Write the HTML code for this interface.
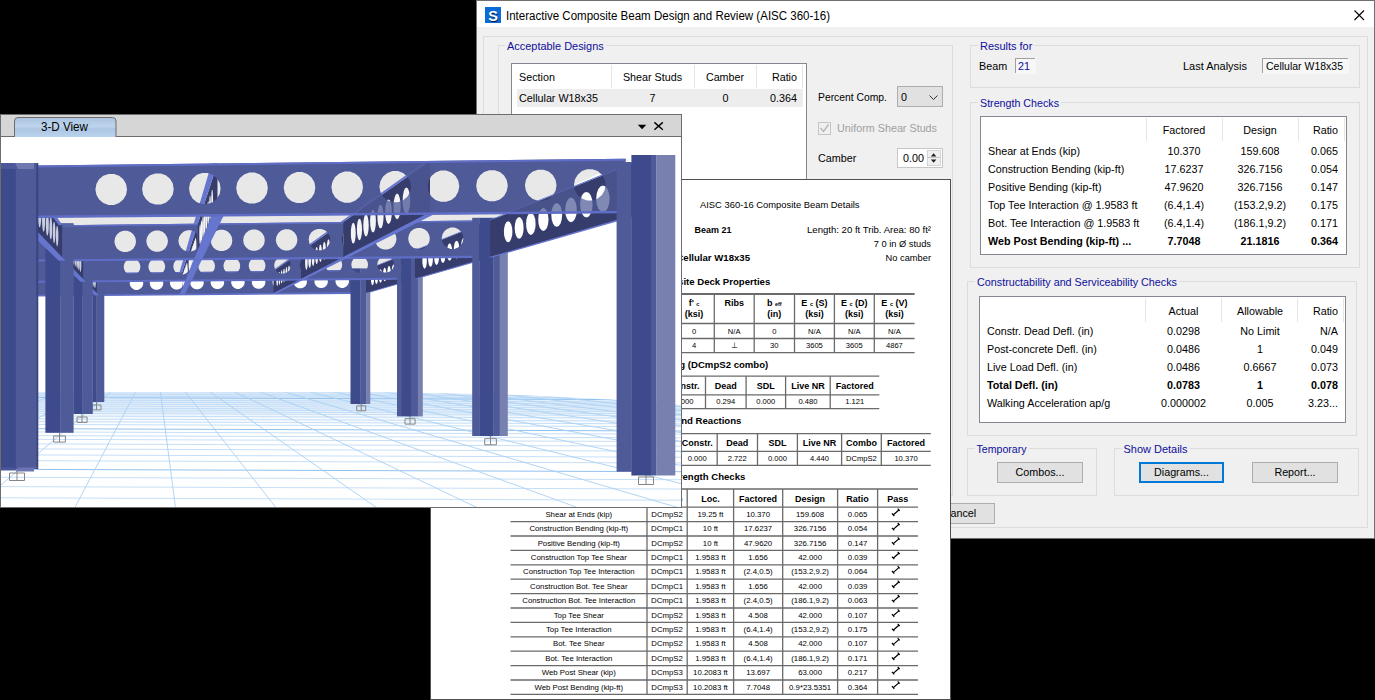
<!DOCTYPE html><html><head><meta charset="utf-8"><style>html,body{margin:0;padding:0;background:#000;overflow:hidden}svg{display:block;font-family:"Liberation Sans",sans-serif}</style></head><body>
<svg width="1375" height="700" viewBox="0 0 1375 700">
<rect x="0" y="0" width="1375" height="700" fill="#000"/>
<rect x="476" y="0" width="899" height="539" fill="#f0f0f0"/>
<rect x="477" y="1" width="897" height="26" fill="#fff"/>
<g shape-rendering="crispEdges">
<rect x="476.5" y="0.5" width="898" height="538" fill="none" stroke="#707070" stroke-width="1"/>
</g>
<rect x="485" y="7" width="16" height="16" fill="#0a6ad6"/>
<text x="493.8" y="21.6" font-size="14.5" text-anchor="middle" font-weight="bold" fill="#0a1a40">S</text>
<text x="493" y="20.8" font-size="14.5" text-anchor="middle" font-weight="bold" fill="#fff">S</text>
<text x="506" y="20" font-size="12" textLength="324" lengthAdjust="spacingAndGlyphs">Interactive Composite Beam Design and Review (AISC 360-16)</text>
<path d="M1354.5 10.5L1364 20M1364 10.5L1354.5 20" stroke="#000" stroke-width="1.1"/>
<g shape-rendering="crispEdges">
<rect x="483.5" y="36.5" width="884" height="491" fill="none" stroke="#dcdcdc" stroke-width="1"/>
</g>
<path d="M505 45.5H498.5V495.5H952.5V45.5H605.7" fill="none" stroke="#dcdcdc" shape-rendering="crispEdges"/>
<text x="507" y="50" font-size="11" fill="#0e0e9c" textLength="96.7" lengthAdjust="spacingAndGlyphs">Acceptable Designs</text>
<path d="M978 45.5H970.5V87.5H1359.5V45.5H1034.3" fill="none" stroke="#dcdcdc" shape-rendering="crispEdges"/>
<text x="980" y="50" font-size="11" fill="#0e0e9c" textLength="52.3" lengthAdjust="spacingAndGlyphs">Results for</text>
<path d="M978 102.5H970.5V267.5H1359.5V102.5H1061" fill="none" stroke="#dcdcdc" shape-rendering="crispEdges"/>
<text x="980" y="107" font-size="11" fill="#0e0e9c" textLength="79" lengthAdjust="spacingAndGlyphs">Strength Checks</text>
<path d="M975 281.5H967.5V435.5H1356.5V281.5H1179" fill="none" stroke="#dcdcdc" shape-rendering="crispEdges"/>
<text x="977" y="286" font-size="11" fill="#0e0e9c" textLength="200" lengthAdjust="spacingAndGlyphs">Constructability and Serviceability Checks</text>
<path d="M974.5 448.5H967.5V495.5H1096.5V448.5H1028.5" fill="none" stroke="#dcdcdc" shape-rendering="crispEdges"/>
<text x="976.5" y="453" font-size="11" fill="#0e0e9c" textLength="50" lengthAdjust="spacingAndGlyphs">Temporary</text>
<path d="M1121.5 448.5H1114.5V495.5H1358.5V448.5H1189.5" fill="none" stroke="#dcdcdc" shape-rendering="crispEdges"/>
<text x="1123.5" y="453" font-size="11" fill="#0e0e9c" textLength="64" lengthAdjust="spacingAndGlyphs">Show Details</text>
<rect x="511" y="63" width="296" height="500" fill="#fff"/>
<g shape-rendering="crispEdges">
<rect x="511.5" y="63.5" width="295" height="497" fill="none" stroke="#828790" stroke-width="1"/>
<line x1="611.5" y1="65" x2="611.5" y2="88" stroke="#e5e5e5" stroke-width="1"/>
<line x1="694.5" y1="65" x2="694.5" y2="88" stroke="#e5e5e5" stroke-width="1"/>
<line x1="756.5" y1="65" x2="756.5" y2="88" stroke="#e5e5e5" stroke-width="1"/>
<line x1="802.5" y1="65" x2="802.5" y2="88" stroke="#e5e5e5" stroke-width="1"/>
<rect x="517" y="89" width="286" height="18" fill="#ededed"/>
</g>
<text x="519" y="81" font-size="10.75">Section</text>
<text x="652.5" y="81" font-size="10.75" text-anchor="middle">Shear Studs</text>
<text x="725" y="81" font-size="10.75" text-anchor="middle">Camber</text>
<text x="797" y="81" font-size="10.75" text-anchor="end">Ratio</text>
<text x="519" y="102" font-size="10.75">Cellular W18x35</text>
<text x="652.5" y="102" font-size="10.75" text-anchor="middle">7</text>
<text x="725.5" y="102" font-size="10.75" text-anchor="middle">0</text>
<text x="797" y="102" font-size="10.75" text-anchor="end">0.364</text>
<text x="818" y="101" font-size="10.75" textLength="69" lengthAdjust="spacingAndGlyphs">Percent Comp.</text>
<g shape-rendering="crispEdges">
<rect x="897" y="86" width="46" height="21" fill="#e1e1e1"/>
<rect x="897.5" y="86.5" width="45" height="20" fill="none" stroke="#adadad" stroke-width="1"/>
</g>
<text x="901" y="101" font-size="10.75">0</text>
<path d="M929.5 95.5L933.5 99.5L937.5 95.5" fill="none" stroke="#333" stroke-width="1"/>
<g shape-rendering="crispEdges">
<rect x="818.5" y="122.5" width="12" height="12" fill="none" stroke="#c5c5c5" stroke-width="1"/>
</g>
<path d="M820.5 128L823.5 131.5L828.5 124.5" fill="none" stroke="#b5b5b5" stroke-width="1.3"/>
<text x="837" y="132" font-size="10.75" fill="#a0a0a0" textLength="100" lengthAdjust="spacingAndGlyphs">Uniform Shear Studs</text>
<text x="818" y="162" font-size="10.75">Camber</text>
<g shape-rendering="crispEdges">
<rect x="897" y="148" width="46" height="20" fill="#fff"/>
<rect x="897.5" y="148.5" width="45" height="19" fill="none" stroke="#c6c6c6" stroke-width="1"/>
<rect x="927" y="150" width="14" height="16" fill="#f0f0f0"/>
<rect x="927.5" y="150.5" width="13" height="15" fill="none" stroke="#d4d4d4" stroke-width="1"/>
<line x1="928" y1="157.5" x2="940" y2="157.5" stroke="#c8c8c8" stroke-width="1"/>
</g>
<text x="924" y="162" font-size="10.75" text-anchor="end">0.00</text>
<path d="M930.8 156.6L933.6 153.2L936.4 156.6Z M930.8 159.4L933.6 162.8L936.4 159.4Z" fill="#222"/>
<text x="979" y="70" font-size="10.75">Beam</text>
<g shape-rendering="crispEdges">
<rect x="1015" y="58" width="21" height="16" fill="#f7f7f7"/>
<path d="M1015.5 73V58.5H1035" fill="none" stroke="#a0a0a0"/>
<rect x="1262" y="58" width="87" height="16" fill="#f7f7f7"/>
<path d="M1262.5 73V58.5H1348" fill="none" stroke="#a0a0a0"/>
</g>
<text x="1018" y="70" font-size="10.75" fill="#0e0e9c">21</text>
<text x="1183" y="70" font-size="10.75" textLength="64" lengthAdjust="spacingAndGlyphs">Last Analysis</text>
<text x="1266" y="70" font-size="10.75" textLength="77" lengthAdjust="spacingAndGlyphs">Cellular W18x35</text>
<g shape-rendering="crispEdges">
<rect x="980" y="116" width="367" height="139" fill="#fff"/>
<rect x="980.5" y="116.5" width="366" height="138" fill="none" stroke="#828790" stroke-width="1"/>
<line x1="1146.5" y1="118" x2="1146.5" y2="141" stroke="#e5e5e5" stroke-width="1"/>
<line x1="1222.5" y1="118" x2="1222.5" y2="141" stroke="#e5e5e5" stroke-width="1"/>
<line x1="1298.5" y1="118" x2="1298.5" y2="141" stroke="#e5e5e5" stroke-width="1"/>
<line x1="1344.5" y1="118" x2="1344.5" y2="141" stroke="#e5e5e5" stroke-width="1"/>
</g>
<text x="1184" y="134" font-size="10.75" text-anchor="middle">Factored</text>
<text x="1260" y="134" font-size="10.75" text-anchor="middle">Design</text>
<text x="1338" y="134" font-size="10.75" text-anchor="end">Ratio</text>
<text x="988" y="155" font-size="10.75">Shear at Ends (kip)</text>
<text x="1184" y="155" font-size="10.75" text-anchor="middle">10.370</text>
<text x="1260" y="155" font-size="10.75" text-anchor="middle">159.608</text>
<text x="1338" y="155" font-size="10.75" text-anchor="end">0.065</text>
<text x="988" y="173" font-size="10.75">Construction Bending (kip-ft)</text>
<text x="1184" y="173" font-size="10.75" text-anchor="middle">17.6237</text>
<text x="1260" y="173" font-size="10.75" text-anchor="middle">326.7156</text>
<text x="1338" y="173" font-size="10.75" text-anchor="end">0.054</text>
<text x="988" y="191" font-size="10.75">Positive Bending (kip-ft)</text>
<text x="1184" y="191" font-size="10.75" text-anchor="middle">47.9620</text>
<text x="1260" y="191" font-size="10.75" text-anchor="middle">326.7156</text>
<text x="1338" y="191" font-size="10.75" text-anchor="end">0.147</text>
<text x="988" y="209" font-size="10.75">Top Tee Interaction @ 1.9583 ft</text>
<text x="1184" y="209" font-size="10.75" text-anchor="middle">(6.4,1.4)</text>
<text x="1260" y="209" font-size="10.75" text-anchor="middle">(153.2,9.2)</text>
<text x="1338" y="209" font-size="10.75" text-anchor="end">0.175</text>
<text x="988" y="227" font-size="10.75">Bot. Tee Interaction @ 1.9583 ft</text>
<text x="1184" y="227" font-size="10.75" text-anchor="middle">(6.4,1.4)</text>
<text x="1260" y="227" font-size="10.75" text-anchor="middle">(186.1,9.2)</text>
<text x="1338" y="227" font-size="10.75" text-anchor="end">0.171</text>
<text x="988" y="245" font-size="10.75" font-weight="bold">Web Post Bending (kip-ft) ...</text>
<text x="1184" y="245" font-size="10.75" text-anchor="middle" font-weight="bold">7.7048</text>
<text x="1260" y="245" font-size="10.75" text-anchor="middle" font-weight="bold">21.1816</text>
<text x="1338" y="245" font-size="10.75" text-anchor="end" font-weight="bold">0.364</text>
<g shape-rendering="crispEdges">
<rect x="979" y="296" width="367" height="127" fill="#fff"/>
<rect x="979.5" y="296.5" width="366" height="126" fill="none" stroke="#828790" stroke-width="1"/>
<line x1="1145.5" y1="298" x2="1145.5" y2="322" stroke="#e5e5e5" stroke-width="1"/>
<line x1="1221.5" y1="298" x2="1221.5" y2="322" stroke="#e5e5e5" stroke-width="1"/>
<line x1="1297.5" y1="298" x2="1297.5" y2="322" stroke="#e5e5e5" stroke-width="1"/>
<line x1="1343.5" y1="298" x2="1343.5" y2="322" stroke="#e5e5e5" stroke-width="1"/>
</g>
<text x="1183.5" y="315" font-size="10.75" text-anchor="middle">Actual</text>
<text x="1260" y="315" font-size="10.75" text-anchor="middle">Allowable</text>
<text x="1338" y="315" font-size="10.75" text-anchor="end">Ratio</text>
<text x="987" y="335" font-size="10.75">Constr. Dead Defl. (in)</text>
<text x="1183.5" y="335" font-size="10.75" text-anchor="middle">0.0298</text>
<text x="1260" y="335" font-size="10.75" text-anchor="middle">No Limit</text>
<text x="1338" y="335" font-size="10.75" text-anchor="end">N/A</text>
<text x="987" y="353" font-size="10.75">Post-concrete Defl. (in)</text>
<text x="1183.5" y="353" font-size="10.75" text-anchor="middle">0.0486</text>
<text x="1260" y="353" font-size="10.75" text-anchor="middle">1</text>
<text x="1338" y="353" font-size="10.75" text-anchor="end">0.049</text>
<text x="987" y="371" font-size="10.75">Live Load Defl. (in)</text>
<text x="1183.5" y="371" font-size="10.75" text-anchor="middle">0.0486</text>
<text x="1260" y="371" font-size="10.75" text-anchor="middle">0.6667</text>
<text x="1338" y="371" font-size="10.75" text-anchor="end">0.073</text>
<text x="987" y="389" font-size="10.75" font-weight="bold">Total Defl. (in)</text>
<text x="1183.5" y="389" font-size="10.75" text-anchor="middle" font-weight="bold">0.0783</text>
<text x="1260" y="389" font-size="10.75" text-anchor="middle" font-weight="bold">1</text>
<text x="1338" y="389" font-size="10.75" text-anchor="end" font-weight="bold">0.078</text>
<text x="987" y="407" font-size="10.75">Walking Acceleration ap/g</text>
<text x="1183.5" y="407" font-size="10.75" text-anchor="middle">0.000002</text>
<text x="1260" y="407" font-size="10.75" text-anchor="middle">0.005</text>
<text x="1338" y="407" font-size="10.75" text-anchor="end">3.23...</text>
<g shape-rendering="crispEdges">
<rect x="997" y="462" width="86" height="21" fill="#e1e1e1"/>
<rect x="997.5" y="462.5" width="85" height="20" fill="none" stroke="#adadad" stroke-width="1"/>
</g>
<text x="1040.0" y="476" font-size="10.75" text-anchor="middle">Combos...</text>
<g shape-rendering="crispEdges">
<rect x="1139" y="462" width="85" height="21" fill="#e1e1e1"/>
<rect x="1140" y="463" width="83" height="19" fill="none" stroke="#0078d7" stroke-width="2"/>
</g>
<text x="1181.5" y="476" font-size="10.75" text-anchor="middle">Diagrams...</text>
<g shape-rendering="crispEdges">
<rect x="1252" y="462" width="86" height="21" fill="#e1e1e1"/>
<rect x="1252.5" y="462.5" width="85" height="20" fill="none" stroke="#adadad" stroke-width="1"/>
</g>
<text x="1295.0" y="476" font-size="10.75" text-anchor="middle">Report...</text>
<g shape-rendering="crispEdges">
<rect x="924" y="503" width="71" height="21" fill="#e1e1e1"/>
<rect x="924.5" y="503.5" width="70" height="20" fill="none" stroke="#adadad" stroke-width="1"/>
</g>
<text x="959.5" y="517" font-size="10.75" text-anchor="middle">Cancel</text>
<rect x="430" y="179" width="521" height="521" fill="#fff"/>
<g shape-rendering="crispEdges">
<rect x="430.5" y="179.5" width="520" height="520" fill="none" stroke="#505050" stroke-width="1"/>
</g>
<text x="700" y="208" font-size="9.3" textLength="159.5" lengthAdjust="spacingAndGlyphs">AISC 360-16 Composite Beam Details</text>
<text x="694.6" y="233" font-size="9" font-weight="bold" textLength="36.8" lengthAdjust="spacingAndGlyphs">Beam 21</text>
<text x="931" y="233" font-size="9.3" text-anchor="end" textLength="124" lengthAdjust="spacingAndGlyphs">Length: 20 ft Trib. Area: 80 ft²</text>
<text x="931" y="247" font-size="9.3" text-anchor="end">7 0 in Ø studs</text>
<text x="931" y="261" font-size="9.3" text-anchor="end" textLength="45.4" lengthAdjust="spacingAndGlyphs">No camber</text>
<text x="750" y="261" font-size="9.6" text-anchor="end" font-weight="bold">Cellular W18x35</text>
<text x="770.3" y="285" font-size="9.6" text-anchor="end" font-weight="bold">Composite Deck Properties</text>
<line x1="560" y1="294" x2="914.6" y2="294" stroke="#6a6a6a" stroke-width="1.8"/>
<line x1="560" y1="323.5" x2="914.6" y2="323.5" stroke="#6a6a6a" stroke-width="1.3"/>
<line x1="560" y1="338.5" x2="914.6" y2="338.5" stroke="#6a6a6a" stroke-width="1.3"/>
<line x1="560" y1="352.6" x2="914.6" y2="352.6" stroke="#6a6a6a" stroke-width="1.3"/>
<line x1="674" y1="294" x2="674" y2="352.6" stroke="#6a6a6a" stroke-width="1.3"/>
<line x1="714.3" y1="294" x2="714.3" y2="352.6" stroke="#6a6a6a" stroke-width="1.3"/>
<line x1="754.2" y1="294" x2="754.2" y2="352.6" stroke="#6a6a6a" stroke-width="1.3"/>
<line x1="794.5" y1="294" x2="794.5" y2="352.6" stroke="#6a6a6a" stroke-width="1.3"/>
<line x1="834.4" y1="294" x2="834.4" y2="352.6" stroke="#6a6a6a" stroke-width="1.3"/>
<line x1="874.3" y1="294" x2="874.3" y2="352.6" stroke="#6a6a6a" stroke-width="1.3"/>
<text x="694" y="306" font-size="9" text-anchor="middle" font-weight="bold">f' <tspan font-size='5.5'>c</tspan></text>
<text x="694" y="317" font-size="9" text-anchor="middle" font-weight="bold">(ksi)</text>
<text x="694" y="333.5" font-size="7.6" text-anchor="middle">0</text>
<text x="694" y="348" font-size="7.6" text-anchor="middle">4</text>
<text x="734.2" y="306" font-size="9" text-anchor="middle" font-weight="bold">Ribs</text>
<text x="734.2" y="333.5" font-size="7.6" text-anchor="middle">N/A</text>
<text x="734.2" y="348" font-size="7.6" text-anchor="middle">⊥</text>
<text x="774.3" y="306" font-size="9" text-anchor="middle" font-weight="bold">b <tspan font-size='5.5'>eff</tspan></text>
<text x="774.3" y="317" font-size="9" text-anchor="middle" font-weight="bold">(in)</text>
<text x="774.3" y="333.5" font-size="7.6" text-anchor="middle">0</text>
<text x="774.3" y="348" font-size="7.6" text-anchor="middle">30</text>
<text x="814.4" y="306" font-size="9" text-anchor="middle" font-weight="bold">E <tspan font-size='5.5'>c</tspan> (S)</text>
<text x="814.4" y="317" font-size="9" text-anchor="middle" font-weight="bold">(ksi)</text>
<text x="814.4" y="333.5" font-size="7.6" text-anchor="middle">N/A</text>
<text x="814.4" y="348" font-size="7.6" text-anchor="middle">3605</text>
<text x="854.3" y="306" font-size="9" text-anchor="middle" font-weight="bold">E <tspan font-size='5.5'>c</tspan> (D)</text>
<text x="854.3" y="317" font-size="9" text-anchor="middle" font-weight="bold">(ksi)</text>
<text x="854.3" y="333.5" font-size="7.6" text-anchor="middle">N/A</text>
<text x="854.3" y="348" font-size="7.6" text-anchor="middle">3605</text>
<text x="894.4" y="306" font-size="9" text-anchor="middle" font-weight="bold">E <tspan font-size='5.5'>c</tspan> (V)</text>
<text x="894.4" y="317" font-size="9" text-anchor="middle" font-weight="bold">(ksi)</text>
<text x="894.4" y="333.5" font-size="7.6" text-anchor="middle">N/A</text>
<text x="894.4" y="348" font-size="7.6" text-anchor="middle">4867</text>
<text x="768.3" y="367.5" font-size="9.6" text-anchor="end" font-weight="bold">Deflection Loading (DCmpS2 combo)</text>
<line x1="560" y1="376.2" x2="879.3" y2="376.2" stroke="#6a6a6a" stroke-width="1.3"/>
<line x1="560" y1="394.9" x2="879.3" y2="394.9" stroke="#6a6a6a" stroke-width="1.3"/>
<line x1="560" y1="408.6" x2="879.3" y2="408.6" stroke="#6a6a6a" stroke-width="1.3"/>
<line x1="705.5" y1="376.2" x2="705.5" y2="408.6" stroke="#6a6a6a" stroke-width="1.3"/>
<line x1="746.1" y1="376.2" x2="746.1" y2="408.6" stroke="#6a6a6a" stroke-width="1.3"/>
<line x1="785.6" y1="376.2" x2="785.6" y2="408.6" stroke="#6a6a6a" stroke-width="1.3"/>
<line x1="830.2" y1="376.2" x2="830.2" y2="408.6" stroke="#6a6a6a" stroke-width="1.3"/>
<text x="684" y="388.5" font-size="9" text-anchor="middle" font-weight="bold">Constr.</text>
<text x="684" y="404" font-size="7.6" text-anchor="middle">0.000</text>
<text x="725.8" y="388.5" font-size="9" text-anchor="middle" font-weight="bold">Dead</text>
<text x="725.8" y="404" font-size="7.6" text-anchor="middle">0.294</text>
<text x="765.8" y="388.5" font-size="9" text-anchor="middle" font-weight="bold">SDL</text>
<text x="765.8" y="404" font-size="7.6" text-anchor="middle">0.000</text>
<text x="807.9" y="388.5" font-size="9" text-anchor="middle" font-weight="bold">Live NR</text>
<text x="807.9" y="404" font-size="7.6" text-anchor="middle">0.480</text>
<text x="854.7" y="388.5" font-size="9" text-anchor="middle" font-weight="bold">Factored</text>
<text x="854.7" y="404" font-size="7.6" text-anchor="middle">1.121</text>
<text x="741.4" y="424" font-size="9.6" text-anchor="end" font-weight="bold">End Reactions</text>
<line x1="560" y1="433.6" x2="930.8" y2="433.6" stroke="#6a6a6a" stroke-width="1.3"/>
<line x1="560" y1="451.3" x2="930.8" y2="451.3" stroke="#6a6a6a" stroke-width="1.3"/>
<line x1="560" y1="465.4" x2="930.8" y2="465.4" stroke="#6a6a6a" stroke-width="1.3"/>
<line x1="717.2" y1="433.6" x2="717.2" y2="465.4" stroke="#6a6a6a" stroke-width="1.3"/>
<line x1="757.5" y1="433.6" x2="757.5" y2="465.4" stroke="#6a6a6a" stroke-width="1.3"/>
<line x1="797.4" y1="433.6" x2="797.4" y2="465.4" stroke="#6a6a6a" stroke-width="1.3"/>
<line x1="841.6" y1="433.6" x2="841.6" y2="465.4" stroke="#6a6a6a" stroke-width="1.3"/>
<line x1="881.3" y1="433.6" x2="881.3" y2="465.4" stroke="#6a6a6a" stroke-width="1.3"/>
<text x="697.3" y="445.5" font-size="9" text-anchor="middle" font-weight="bold">Constr.</text>
<text x="697.3" y="461" font-size="7.6" text-anchor="middle">0.000</text>
<text x="737.3" y="445.5" font-size="9" text-anchor="middle" font-weight="bold">Dead</text>
<text x="737.3" y="461" font-size="7.6" text-anchor="middle">2.722</text>
<text x="777.4" y="445.5" font-size="9" text-anchor="middle" font-weight="bold">SDL</text>
<text x="777.4" y="461" font-size="7.6" text-anchor="middle">0.000</text>
<text x="819.5" y="445.5" font-size="9" text-anchor="middle" font-weight="bold">Live NR</text>
<text x="819.5" y="461" font-size="7.6" text-anchor="middle">4.440</text>
<text x="861.4" y="445.5" font-size="9" text-anchor="middle" font-weight="bold">Combo</text>
<text x="861.4" y="461" font-size="7.6" text-anchor="middle">DCmpS2</text>
<text x="906" y="445.5" font-size="9" text-anchor="middle" font-weight="bold">Factored</text>
<text x="906" y="461" font-size="7.6" text-anchor="middle">10.370</text>
<text x="745.4" y="480" font-size="9.6" text-anchor="end" font-weight="bold">Strength Checks</text>
<line x1="510.5" y1="489" x2="918" y2="489" stroke="#6a6a6a" stroke-width="1.3"/>
<line x1="510.5" y1="507.2" x2="918" y2="507.2" stroke="#6a6a6a" stroke-width="1.3"/>
<line x1="510.5" y1="521.6" x2="918" y2="521.6" stroke="#6a6a6a" stroke-width="1.3"/>
<line x1="510.5" y1="536.0" x2="918" y2="536.0" stroke="#6a6a6a" stroke-width="1.3"/>
<line x1="510.5" y1="550.4" x2="918" y2="550.4" stroke="#6a6a6a" stroke-width="1.3"/>
<line x1="510.5" y1="564.8" x2="918" y2="564.8" stroke="#6a6a6a" stroke-width="1.3"/>
<line x1="510.5" y1="579.2" x2="918" y2="579.2" stroke="#6a6a6a" stroke-width="1.3"/>
<line x1="510.5" y1="593.6" x2="918" y2="593.6" stroke="#6a6a6a" stroke-width="1.3"/>
<line x1="510.5" y1="608.0" x2="918" y2="608.0" stroke="#6a6a6a" stroke-width="1.3"/>
<line x1="510.5" y1="622.4" x2="918" y2="622.4" stroke="#6a6a6a" stroke-width="1.3"/>
<line x1="510.5" y1="636.8" x2="918" y2="636.8" stroke="#6a6a6a" stroke-width="1.3"/>
<line x1="510.5" y1="651.2" x2="918" y2="651.2" stroke="#6a6a6a" stroke-width="1.3"/>
<line x1="510.5" y1="665.6" x2="918" y2="665.6" stroke="#6a6a6a" stroke-width="1.3"/>
<line x1="510.5" y1="680.0" x2="918" y2="680.0" stroke="#6a6a6a" stroke-width="1.3"/>
<line x1="510.5" y1="694.4" x2="918" y2="694.4" stroke="#6a6a6a" stroke-width="1.3"/>
<line x1="647" y1="489" x2="647" y2="694.4" stroke="#6a6a6a" stroke-width="1.3"/>
<line x1="687.2" y1="489" x2="687.2" y2="694.4" stroke="#6a6a6a" stroke-width="1.3"/>
<line x1="733.6" y1="489" x2="733.6" y2="694.4" stroke="#6a6a6a" stroke-width="1.3"/>
<line x1="782.7" y1="489" x2="782.7" y2="694.4" stroke="#6a6a6a" stroke-width="1.3"/>
<line x1="837.6" y1="489" x2="837.6" y2="694.4" stroke="#6a6a6a" stroke-width="1.3"/>
<line x1="877.6" y1="489" x2="877.6" y2="694.4" stroke="#6a6a6a" stroke-width="1.3"/>
<text x="578.8" y="501.5" font-size="9" text-anchor="middle" font-weight="bold">Check</text>
<text x="667.1" y="501.5" font-size="9" text-anchor="middle" font-weight="bold">Combo</text>
<text x="710.4" y="501.5" font-size="9" text-anchor="middle" font-weight="bold">Loc.</text>
<text x="758.1" y="501.5" font-size="9" text-anchor="middle" font-weight="bold">Factored</text>
<text x="810.1" y="501.5" font-size="9" text-anchor="middle" font-weight="bold">Design</text>
<text x="857.6" y="501.5" font-size="9" text-anchor="middle" font-weight="bold">Ratio</text>
<text x="897.8" y="501.5" font-size="9" text-anchor="middle" font-weight="bold">Pass</text>
<text x="578.8" y="516.8" font-size="7.8" text-anchor="middle">Shear at Ends (kip)</text>
<text x="667.1" y="516.8" font-size="7.8" text-anchor="middle">DCmpS2</text>
<text x="710.4" y="516.8" font-size="7.8" text-anchor="middle">19.25 ft</text>
<text x="758.1" y="516.8" font-size="7.8" text-anchor="middle">10.370</text>
<text x="810.1" y="516.8" font-size="7.8" text-anchor="middle">159.608</text>
<text x="857.6" y="516.8" font-size="7.8" text-anchor="middle">0.065</text>
<path d="M893.2 515.0L899.1 509.8M891.9 513.4L894.3 516.0M897.7 508.6L899.7 510.8" fill="none" stroke="#000" stroke-width="1.2"/>
<text x="578.8" y="531.2" font-size="7.8" text-anchor="middle">Construction Bending (kip-ft)</text>
<text x="667.1" y="531.2" font-size="7.8" text-anchor="middle">DCmpC1</text>
<text x="710.4" y="531.2" font-size="7.8" text-anchor="middle">10 ft</text>
<text x="758.1" y="531.2" font-size="7.8" text-anchor="middle">17.6237</text>
<text x="810.1" y="531.2" font-size="7.8" text-anchor="middle">326.7156</text>
<text x="857.6" y="531.2" font-size="7.8" text-anchor="middle">0.054</text>
<path d="M893.2 529.4L899.1 524.2M891.9 527.8L894.3 530.4M897.7 523.0L899.7 525.2" fill="none" stroke="#000" stroke-width="1.2"/>
<text x="578.8" y="545.6" font-size="7.8" text-anchor="middle">Positive Bending (kip-ft)</text>
<text x="667.1" y="545.6" font-size="7.8" text-anchor="middle">DCmpS2</text>
<text x="710.4" y="545.6" font-size="7.8" text-anchor="middle">10 ft</text>
<text x="758.1" y="545.6" font-size="7.8" text-anchor="middle">47.9620</text>
<text x="810.1" y="545.6" font-size="7.8" text-anchor="middle">326.7156</text>
<text x="857.6" y="545.6" font-size="7.8" text-anchor="middle">0.147</text>
<path d="M893.2 543.8L899.1 538.6M891.9 542.2L894.3 544.8M897.7 537.4L899.7 539.6" fill="none" stroke="#000" stroke-width="1.2"/>
<text x="578.8" y="560.0" font-size="7.8" text-anchor="middle">Construction Top Tee Shear</text>
<text x="667.1" y="560.0" font-size="7.8" text-anchor="middle">DCmpC1</text>
<text x="710.4" y="560.0" font-size="7.8" text-anchor="middle">1.9583 ft</text>
<text x="758.1" y="560.0" font-size="7.8" text-anchor="middle">1.656</text>
<text x="810.1" y="560.0" font-size="7.8" text-anchor="middle">42.000</text>
<text x="857.6" y="560.0" font-size="7.8" text-anchor="middle">0.039</text>
<path d="M893.2 558.2L899.1 553.0M891.9 556.6L894.3 559.2M897.7 551.8L899.7 554.0" fill="none" stroke="#000" stroke-width="1.2"/>
<text x="578.8" y="574.4" font-size="7.8" text-anchor="middle">Construction Top Tee Interaction</text>
<text x="667.1" y="574.4" font-size="7.8" text-anchor="middle">DCmpC1</text>
<text x="710.4" y="574.4" font-size="7.8" text-anchor="middle">1.9583 ft</text>
<text x="758.1" y="574.4" font-size="7.8" text-anchor="middle">(2.4,0.5)</text>
<text x="810.1" y="574.4" font-size="7.8" text-anchor="middle">(153.2,9.2)</text>
<text x="857.6" y="574.4" font-size="7.8" text-anchor="middle">0.064</text>
<path d="M893.2 572.6L899.1 567.4M891.9 571.0L894.3 573.6M897.7 566.2L899.7 568.4" fill="none" stroke="#000" stroke-width="1.2"/>
<text x="578.8" y="588.8000000000001" font-size="7.8" text-anchor="middle">Construction Bot. Tee Shear</text>
<text x="667.1" y="588.8000000000001" font-size="7.8" text-anchor="middle">DCmpC1</text>
<text x="710.4" y="588.8000000000001" font-size="7.8" text-anchor="middle">1.9583 ft</text>
<text x="758.1" y="588.8000000000001" font-size="7.8" text-anchor="middle">1.656</text>
<text x="810.1" y="588.8000000000001" font-size="7.8" text-anchor="middle">42.000</text>
<text x="857.6" y="588.8000000000001" font-size="7.8" text-anchor="middle">0.039</text>
<path d="M893.2 587.0L899.1 581.8M891.9 585.4L894.3 588.0M897.7 580.6L899.7 582.8" fill="none" stroke="#000" stroke-width="1.2"/>
<text x="578.8" y="603.2" font-size="7.8" text-anchor="middle">Construction Bot. Tee Interaction</text>
<text x="667.1" y="603.2" font-size="7.8" text-anchor="middle">DCmpC1</text>
<text x="710.4" y="603.2" font-size="7.8" text-anchor="middle">1.9583 ft</text>
<text x="758.1" y="603.2" font-size="7.8" text-anchor="middle">(2.4,0.5)</text>
<text x="810.1" y="603.2" font-size="7.8" text-anchor="middle">(186.1,9.2)</text>
<text x="857.6" y="603.2" font-size="7.8" text-anchor="middle">0.063</text>
<path d="M893.2 601.4L899.1 596.2M891.9 599.8L894.3 602.4M897.7 595.0L899.7 597.2" fill="none" stroke="#000" stroke-width="1.2"/>
<text x="578.8" y="617.6" font-size="7.8" text-anchor="middle">Top Tee Shear</text>
<text x="667.1" y="617.6" font-size="7.8" text-anchor="middle">DCmpS2</text>
<text x="710.4" y="617.6" font-size="7.8" text-anchor="middle">1.9583 ft</text>
<text x="758.1" y="617.6" font-size="7.8" text-anchor="middle">4.508</text>
<text x="810.1" y="617.6" font-size="7.8" text-anchor="middle">42.000</text>
<text x="857.6" y="617.6" font-size="7.8" text-anchor="middle">0.107</text>
<path d="M893.2 615.8L899.1 610.6M891.9 614.2L894.3 616.8M897.7 609.4L899.7 611.6" fill="none" stroke="#000" stroke-width="1.2"/>
<text x="578.8" y="632.0" font-size="7.8" text-anchor="middle">Top Tee Interaction</text>
<text x="667.1" y="632.0" font-size="7.8" text-anchor="middle">DCmpS2</text>
<text x="710.4" y="632.0" font-size="7.8" text-anchor="middle">1.9583 ft</text>
<text x="758.1" y="632.0" font-size="7.8" text-anchor="middle">(6.4,1.4)</text>
<text x="810.1" y="632.0" font-size="7.8" text-anchor="middle">(153.2,9.2)</text>
<text x="857.6" y="632.0" font-size="7.8" text-anchor="middle">0.175</text>
<path d="M893.2 630.2L899.1 625.0M891.9 628.6L894.3 631.2M897.7 623.8L899.7 626.0" fill="none" stroke="#000" stroke-width="1.2"/>
<text x="578.8" y="646.4" font-size="7.8" text-anchor="middle">Bot. Tee Shear</text>
<text x="667.1" y="646.4" font-size="7.8" text-anchor="middle">DCmpS2</text>
<text x="710.4" y="646.4" font-size="7.8" text-anchor="middle">1.9583 ft</text>
<text x="758.1" y="646.4" font-size="7.8" text-anchor="middle">4.508</text>
<text x="810.1" y="646.4" font-size="7.8" text-anchor="middle">42.000</text>
<text x="857.6" y="646.4" font-size="7.8" text-anchor="middle">0.107</text>
<path d="M893.2 644.6L899.1 639.4M891.9 643.0L894.3 645.6M897.7 638.2L899.7 640.4" fill="none" stroke="#000" stroke-width="1.2"/>
<text x="578.8" y="660.8000000000001" font-size="7.8" text-anchor="middle">Bot. Tee Interaction</text>
<text x="667.1" y="660.8000000000001" font-size="7.8" text-anchor="middle">DCmpS2</text>
<text x="710.4" y="660.8000000000001" font-size="7.8" text-anchor="middle">1.9583 ft</text>
<text x="758.1" y="660.8000000000001" font-size="7.8" text-anchor="middle">(6.4,1.4)</text>
<text x="810.1" y="660.8000000000001" font-size="7.8" text-anchor="middle">(186.1,9.2)</text>
<text x="857.6" y="660.8000000000001" font-size="7.8" text-anchor="middle">0.171</text>
<path d="M893.2 659.0L899.1 653.8M891.9 657.4L894.3 660.0M897.7 652.6L899.7 654.8" fill="none" stroke="#000" stroke-width="1.2"/>
<text x="578.8" y="675.2" font-size="7.8" text-anchor="middle">Web Post Shear (kip)</text>
<text x="667.1" y="675.2" font-size="7.8" text-anchor="middle">DCmpS3</text>
<text x="710.4" y="675.2" font-size="7.8" text-anchor="middle">10.2083 ft</text>
<text x="758.1" y="675.2" font-size="7.8" text-anchor="middle">13.697</text>
<text x="810.1" y="675.2" font-size="7.8" text-anchor="middle">63.000</text>
<text x="857.6" y="675.2" font-size="7.8" text-anchor="middle">0.217</text>
<path d="M893.2 673.4L899.1 668.2M891.9 671.8L894.3 674.4M897.7 667.0L899.7 669.2" fill="none" stroke="#000" stroke-width="1.2"/>
<text x="578.8" y="689.6" font-size="7.8" text-anchor="middle">Web Post Bending (kip-ft)</text>
<text x="667.1" y="689.6" font-size="7.8" text-anchor="middle">DCmpS3</text>
<text x="710.4" y="689.6" font-size="7.8" text-anchor="middle">10.2083 ft</text>
<text x="758.1" y="689.6" font-size="7.8" text-anchor="middle">7.7048</text>
<text x="810.1" y="689.6" font-size="7.8" text-anchor="middle">0.9*23.5351</text>
<text x="857.6" y="689.6" font-size="7.8" text-anchor="middle">0.364</text>
<path d="M893.2 687.8L899.1 682.6M891.9 686.2L894.3 688.8M897.7 681.4L899.7 683.6" fill="none" stroke="#000" stroke-width="1.2"/>
<rect x="0" y="114" width="682" height="394" fill="#d6d6d6"/>
<clipPath id="v3clip"><rect x="1" y="137" width="680" height="371"/></clipPath>
<g clip-path="url(#v3clip)">
<rect x="1" y="137" width="680" height="371" fill="#fff"/>
<defs><linearGradient id="hz" x1="0" y1="0" x2="0" y2="1"><stop offset="0" stop-color="#d6e7f9"/><stop offset="1" stop-color="#d6e7f9" stop-opacity="0"/></linearGradient><clipPath id="floor"><path d="M1 392L400 392.5L520 395L617 400L681 405L681 508L1 508Z"/></clipPath></defs>
<g clip-path="url(#floor)">
<rect x="1" y="391" width="680" height="36" fill="url(#hz)"/>
<line x1="1" y1="391.3" x2="681" y2="393.7" stroke="#b7d7f5" stroke-width="0.8"/>
<line x1="1" y1="393.8" x2="681" y2="396.2" stroke="#b7d7f5" stroke-width="0.8"/>
<line x1="1" y1="395.8" x2="681" y2="398.2" stroke="#b7d7f5" stroke-width="0.8"/>
<line x1="1" y1="397.40000000000003" x2="681" y2="399.8" stroke="#92c1ef" stroke-width="1"/>
<line x1="1" y1="399.8" x2="681" y2="402.2" stroke="#b7d7f5" stroke-width="0.8"/>
<line x1="1" y1="401.8" x2="681" y2="404.2" stroke="#b7d7f5" stroke-width="0.8"/>
<line x1="1" y1="403.8" x2="681" y2="406.2" stroke="#b7d7f5" stroke-width="0.8"/>
<line x1="1" y1="405.8" x2="681" y2="408.2" stroke="#b7d7f5" stroke-width="0.8"/>
<line x1="1" y1="407.8" x2="681" y2="410.2" stroke="#b7d7f5" stroke-width="0.8"/>
<line x1="1" y1="409.5" x2="681" y2="411.9" stroke="#b7d7f5" stroke-width="0.8"/>
<line x1="1" y1="411.3" x2="681" y2="413.7" stroke="#b7d7f5" stroke-width="0.8"/>
<line x1="1" y1="413.2" x2="681" y2="415.59999999999997" stroke="#b7d7f5" stroke-width="0.8"/>
<line x1="1" y1="415.8" x2="681" y2="418.2" stroke="#b7d7f5" stroke-width="0.8"/>
<line x1="1" y1="418.8" x2="681" y2="421.2" stroke="#b7d7f5" stroke-width="0.8"/>
<line x1="1" y1="421.5" x2="681" y2="423.9" stroke="#b7d7f5" stroke-width="0.8"/>
<line x1="1" y1="424.3" x2="681" y2="426.7" stroke="#b7d7f5" stroke-width="0.8"/>
<line x1="1" y1="428.6" x2="681" y2="431.0" stroke="#92c1ef" stroke-width="1"/>
<line x1="1" y1="431.8" x2="681" y2="434.2" stroke="#b7d7f5" stroke-width="0.8"/>
<line x1="1" y1="435.5" x2="681" y2="437.9" stroke="#b7d7f5" stroke-width="0.8"/>
<line x1="1" y1="439.2" x2="681" y2="441.59999999999997" stroke="#b7d7f5" stroke-width="0.8"/>
<line x1="1" y1="443.8" x2="681" y2="446.2" stroke="#b7d7f5" stroke-width="0.8"/>
<line x1="1" y1="448.8" x2="681" y2="451.2" stroke="#b7d7f5" stroke-width="0.8"/>
<line x1="1" y1="454.8" x2="681" y2="457.2" stroke="#b7d7f5" stroke-width="0.8"/>
<line x1="1" y1="460.6" x2="681" y2="463.0" stroke="#b7d7f5" stroke-width="0.8"/>
<line x1="1" y1="469.3" x2="681" y2="471.7" stroke="#92c1ef" stroke-width="1"/>
<line x1="1" y1="477.3" x2="681" y2="479.7" stroke="#b7d7f5" stroke-width="0.8"/>
<line x1="1" y1="486.6" x2="681" y2="489.0" stroke="#b7d7f5" stroke-width="0.8"/>
<line x1="1" y1="497.8" x2="681" y2="500.2" stroke="#b7d7f5" stroke-width="0.8"/>
<line x1="155.5" y1="354.0" x2="-630.9" y2="508" stroke="#a9d0f3" stroke-width="0.9"/>
<line x1="155.5" y1="354.0" x2="-530.1" y2="508" stroke="#a9d0f3" stroke-width="0.9"/>
<line x1="155.5" y1="354.0" x2="-429.3" y2="508" stroke="#a9d0f3" stroke-width="0.9"/>
<line x1="155.5" y1="354.0" x2="-328.5" y2="508" stroke="#a9d0f3" stroke-width="0.9"/>
<line x1="155.5" y1="354.0" x2="-227.7" y2="508" stroke="#a9d0f3" stroke-width="0.9"/>
<line x1="155.5" y1="354.0" x2="-126.9" y2="508" stroke="#a9d0f3" stroke-width="0.9"/>
<line x1="155.5" y1="354.0" x2="-26.1" y2="508" stroke="#a9d0f3" stroke-width="0.9"/>
<line x1="155.5" y1="354.0" x2="74.7" y2="508" stroke="#a9d0f3" stroke-width="0.9"/>
<line x1="155.5" y1="354.0" x2="175.5" y2="508" stroke="#a9d0f3" stroke-width="0.9"/>
<line x1="155.5" y1="354.0" x2="276.3" y2="508" stroke="#a9d0f3" stroke-width="0.9"/>
<line x1="155.5" y1="354.0" x2="377.1" y2="508" stroke="#a9d0f3" stroke-width="0.9"/>
<line x1="155.5" y1="354.0" x2="477.9" y2="508" stroke="#a9d0f3" stroke-width="0.9"/>
<line x1="155.5" y1="354.0" x2="578.7" y2="508" stroke="#a9d0f3" stroke-width="0.9"/>
<line x1="155.5" y1="354.0" x2="679.5" y2="508" stroke="#a9d0f3" stroke-width="0.9"/>
<line x1="155.5" y1="354.0" x2="780.3" y2="508" stroke="#a9d0f3" stroke-width="0.9"/>
<line x1="155.5" y1="354.0" x2="881.1" y2="508" stroke="#a9d0f3" stroke-width="0.9"/>
<line x1="155.5" y1="354.0" x2="981.9" y2="508" stroke="#a9d0f3" stroke-width="0.9"/>
<line x1="155.5" y1="354.0" x2="1082.7" y2="508" stroke="#a9d0f3" stroke-width="0.9"/>
<line x1="155.5" y1="354.0" x2="1183.5" y2="508" stroke="#a9d0f3" stroke-width="0.9"/>
<line x1="155.5" y1="354.0" x2="1284.3" y2="508" stroke="#a9d0f3" stroke-width="0.9"/>
<line x1="155.5" y1="354.0" x2="1385.1" y2="508" stroke="#a9d0f3" stroke-width="0.9"/>
<line x1="155.5" y1="354.0" x2="1485.9" y2="508" stroke="#a9d0f3" stroke-width="0.9"/>
<line x1="155.5" y1="354.0" x2="1586.7" y2="508" stroke="#a9d0f3" stroke-width="0.9"/>
<line x1="155.5" y1="354.0" x2="1687.5" y2="508" stroke="#a9d0f3" stroke-width="0.9"/>
<line x1="155.5" y1="354.0" x2="1788.3" y2="508" stroke="#a9d0f3" stroke-width="0.9"/>
<line x1="155.5" y1="354.0" x2="1889.1" y2="508" stroke="#a9d0f3" stroke-width="0.9"/>
<line x1="155.5" y1="354.0" x2="1989.9" y2="508" stroke="#a9d0f3" stroke-width="0.9"/>
<line x1="155.5" y1="354.0" x2="2090.7" y2="508" stroke="#a9d0f3" stroke-width="0.9"/>
<line x1="155.5" y1="354.0" x2="2191.5" y2="508" stroke="#a9d0f3" stroke-width="0.9"/>
<line x1="155.5" y1="354.0" x2="2292.3" y2="508" stroke="#a9d0f3" stroke-width="0.9"/>
<line x1="155.5" y1="354.0" x2="2393.1" y2="508" stroke="#a9d0f3" stroke-width="0.9"/>
<line x1="155.5" y1="354.0" x2="2493.9" y2="508" stroke="#a9d0f3" stroke-width="0.9"/>
<line x1="155.5" y1="354.0" x2="2594.7" y2="508" stroke="#a9d0f3" stroke-width="0.9"/>
<line x1="155.5" y1="354.0" x2="2695.5" y2="508" stroke="#a9d0f3" stroke-width="0.9"/>
<line x1="155.5" y1="354.0" x2="2796.3" y2="508" stroke="#a9d0f3" stroke-width="0.9"/>
<line x1="155.5" y1="354.0" x2="2897.1" y2="508" stroke="#a9d0f3" stroke-width="0.9"/>
<line x1="155.5" y1="354.0" x2="2997.9" y2="508" stroke="#a9d0f3" stroke-width="0.9"/>
<line x1="155.5" y1="354.0" x2="3098.7" y2="508" stroke="#a9d0f3" stroke-width="0.9"/>
<line x1="155.5" y1="354.0" x2="3199.5" y2="508" stroke="#a9d0f3" stroke-width="0.9"/>
<line x1="155.5" y1="354.0" x2="3300.3" y2="508" stroke="#a9d0f3" stroke-width="0.9"/>
<line x1="155.5" y1="354.0" x2="3401.1" y2="508" stroke="#a9d0f3" stroke-width="0.9"/>
<line x1="155.5" y1="354.0" x2="3501.9" y2="508" stroke="#a9d0f3" stroke-width="0.9"/>
<line x1="155.5" y1="354.0" x2="3602.7" y2="508" stroke="#a9d0f3" stroke-width="0.9"/>
<line x1="155.5" y1="354.0" x2="3703.5" y2="508" stroke="#a9d0f3" stroke-width="0.9"/>
<line x1="155.5" y1="354.0" x2="3804.3" y2="508" stroke="#a9d0f3" stroke-width="0.9"/>
<line x1="155.5" y1="354.0" x2="3905.1" y2="508" stroke="#a9d0f3" stroke-width="0.9"/>
<line x1="155.5" y1="354.0" x2="4005.9" y2="508" stroke="#a9d0f3" stroke-width="0.9"/>
<line x1="155.5" y1="354.0" x2="4106.7" y2="508" stroke="#a9d0f3" stroke-width="0.9"/>
</g>
<polygon points="19.0,167.1 630.0,159.6 387.7,269.7 96.8,273.0" fill="#e8e8e8"/>
<path d="M92.0 405.0h9.0v4.9h-9.0Z M96.5 402.0v7.9" fill="none" stroke="#858585" stroke-width="1"/>
<path d="M356.7 405.9h9.0v4.9h-9.0Z M361.2 402.9v7.9" fill="none" stroke="#858585" stroke-width="1"/>
<path d="M36.5 273.7L351.5 270.1L351.5 293.3L36.5 295.9ZM143.3 283.2L142.9 285.6L141.7 287.6L139.9 289.1L137.6 289.9L135.3 289.9L133.1 289.1L131.3 287.6L130.1 285.6L129.7 283.2L130.1 280.9L131.3 278.9L133.1 277.4L135.3 276.5L137.6 276.5L139.9 277.4L141.7 278.9L142.9 280.9ZM163.3 283.0L162.9 285.4L161.7 287.4L159.9 288.9L157.7 289.7L155.4 289.7L153.1 288.9L151.3 287.4L150.2 285.4L149.7 283.0L150.2 280.7L151.3 278.7L153.1 277.2L155.4 276.3L157.7 276.3L159.9 277.2L161.7 278.7L162.9 280.7ZM183.5 282.8L183.1 285.2L181.9 287.2L180.1 288.7L177.9 289.5L175.5 289.5L173.3 288.7L171.5 287.2L170.3 285.2L169.9 282.8L170.3 280.5L171.5 278.5L173.3 277.0L175.5 276.1L177.9 276.1L180.1 277.0L181.9 278.5L183.1 280.5ZM203.8 282.6L203.4 285.0L202.2 287.0L200.4 288.5L198.2 289.3L195.8 289.3L193.6 288.5L191.8 287.0L190.6 285.0L190.2 282.6L190.6 280.3L191.8 278.3L193.6 276.8L195.8 276.0L198.2 276.0L200.4 276.8L202.2 278.3L203.4 280.3ZM224.2 282.4L223.8 284.8L222.6 286.8L220.8 288.3L218.6 289.1L216.2 289.1L214.0 288.3L212.2 286.8L211.0 284.8L210.6 282.4L211.0 280.1L212.2 278.1L214.0 276.6L216.2 275.8L218.6 275.8L220.8 276.6L222.6 278.1L223.8 280.1ZM244.7 282.2L244.3 284.6L243.1 286.6L241.3 288.1L239.1 288.9L236.8 288.9L234.5 288.1L232.7 286.6L231.6 284.6L231.1 282.2L231.6 279.9L232.7 277.9L234.5 276.4L236.8 275.6L239.1 275.6L241.3 276.4L243.1 277.9L244.3 279.9ZM265.4 282.0L265.0 284.4L263.8 286.4L262.0 287.9L259.8 288.7L257.4 288.7L255.2 287.9L253.4 286.4L252.2 284.4L251.8 282.0L252.2 279.7L253.4 277.7L255.2 276.2L257.4 275.4L259.8 275.4L262.0 276.2L263.8 277.7L265.0 279.7ZM286.1 281.8L285.7 284.2L284.5 286.2L282.7 287.7L280.5 288.5L278.1 288.5L275.9 287.7L274.1 286.2L272.9 284.2L272.5 281.8L272.9 279.5L274.1 277.5L275.9 276.0L278.1 275.2L280.5 275.2L282.7 276.0L284.5 277.5L285.7 279.5ZM307.0 281.6L306.6 284.0L305.4 286.0L303.6 287.5L301.4 288.3L299.0 288.3L296.8 287.5L295.0 286.0L293.8 284.0L293.4 281.6L293.8 279.3L295.0 277.3L296.8 275.8L299.0 275.0L301.4 275.0L303.6 275.8L305.4 277.3L306.6 279.3ZM327.9 281.4L327.5 283.8L326.4 285.8L324.6 287.3L322.3 288.1L320.0 288.1L317.8 287.3L316.0 285.8L314.8 283.8L314.4 281.4L314.8 279.1L316.0 277.1L317.8 275.6L320.0 274.8L322.3 274.8L324.6 275.6L326.4 277.1L327.5 279.1ZM349.0 281.2L348.6 283.6L347.4 285.6L345.6 287.1L343.4 287.9L341.1 287.9L338.8 287.1L337.0 285.6L335.9 283.6L335.4 281.2L335.9 278.9L337.0 276.9L338.8 275.4L341.1 274.6L343.4 274.6L345.6 275.4L347.4 276.9L348.6 278.9Z" fill="#4f5a98" fill-rule="evenodd"/>
<path d="M36.5 273.7L351.5 270.1L351.5 271.3L36.5 274.8Z" fill="#5f6dc6"/>
<path d="M36.5 294.7L351.5 292.1L351.5 293.9L36.5 296.5Z" fill="#5f6dc6"/>
<rect x="92.5" y="271.9" width="4.3" height="130.1" fill="#3d4a8c"/>
<rect x="96.5" y="271.9" width="7.8" height="130.1" fill="#4f5b99"/>
<rect x="92.5" y="271.9" width="11.5" height="2.7" fill="#5864a8"/>
<rect x="350.5" y="268.4" width="10.2" height="135.6" fill="#3d4a8c"/>
<rect x="360.4" y="268.4" width="6.0" height="135.6" fill="#4f5b99"/>
<rect x="366.1" y="268.4" width="4.2" height="135.6" fill="#7880b0"/>
<path d="M77.0 417.0h10.1v5.4h-10.1Z M82.0 414.0v8.4" fill="none" stroke="#858585" stroke-width="1"/>
<path d="M405.0 418.7h10.1v5.4h-10.1Z M410.0 415.7v8.4" fill="none" stroke="#858585" stroke-width="1"/>
<path d="M83.2 254.1L83.2 281.7L96.8 295.4L96.8 273.0Z" fill="#363d6c"/>
<path d="M87.3 271.2L87.3 274.0L87.1 276.4L86.8 278.0L86.4 278.5L86.1 278.0L85.8 276.4L85.6 274.0L85.5 271.2L85.6 268.4L85.8 266.0L86.1 264.4L86.4 263.9L86.8 264.4L87.1 266.0L87.3 268.4Z" fill="#c9cde0"/>
<path d="M88.7 272.8L88.6 275.6L88.4 277.9L88.1 279.5L87.8 280.0L87.4 279.5L87.2 277.9L87.0 275.6L86.9 272.8L87.0 270.1L87.2 267.7L87.4 266.2L87.8 265.6L88.1 266.2L88.4 267.7L88.6 270.1Z" fill="#c9cde0"/>
<path d="M90.0 274.4L89.9 277.1L89.7 279.4L89.5 280.9L89.1 281.5L88.8 280.9L88.5 279.4L88.3 277.1L88.2 274.4L88.3 271.7L88.5 269.4L88.8 267.9L89.1 267.4L89.5 267.9L89.7 269.4L89.9 271.7Z" fill="#c9cde0"/>
<path d="M91.3 275.9L91.2 278.6L91.0 280.8L90.7 282.3L90.4 282.8L90.0 282.3L89.7 280.8L89.5 278.6L89.5 275.9L89.5 273.3L89.7 271.0L90.0 269.5L90.4 269.0L90.7 269.5L91.0 271.0L91.2 273.3Z" fill="#c9cde0"/>
<path d="M92.5 277.4L92.4 280.0L92.2 282.2L91.9 283.7L91.6 284.2L91.2 283.7L91.0 282.2L90.8 280.0L90.7 277.4L90.8 274.8L91.0 272.6L91.2 271.1L91.6 270.6L91.9 271.1L92.2 272.6L92.4 274.8Z" fill="#c9cde0"/>
<path d="M93.7 278.8L93.6 281.3L93.4 283.5L93.1 284.9L92.8 285.4L92.4 284.9L92.1 283.5L91.9 281.3L91.9 278.8L91.9 276.2L92.1 274.1L92.4 272.6L92.8 272.1L93.1 272.6L93.4 274.1L93.6 276.2Z" fill="#c9cde0"/>
<path d="M94.8 280.1L94.7 282.6L94.5 284.8L94.2 286.2L93.9 286.7L93.5 286.2L93.3 284.8L93.1 282.6L93.0 280.1L93.1 277.6L93.3 275.5L93.5 274.1L93.9 273.6L94.2 274.1L94.5 275.5L94.7 277.6Z" fill="#c9cde0"/>
<path d="M95.9 281.4L95.8 283.9L95.6 286.0L95.3 287.4L95.0 287.9L94.6 287.4L94.3 286.0L94.1 283.9L94.1 281.4L94.1 279.0L94.3 276.9L94.6 275.5L95.0 275.0L95.3 275.5L95.6 276.9L95.8 279.0Z" fill="#c9cde0"/>
<path d="M80.5 254.2L83.2 254.1L96.8 273.0L94.7 273.0Z" fill="#6676cf"/>
<path d="M80.5 281.7L85.8 281.7L98.9 295.3L94.7 295.4Z" fill="#6676cf"/>
<path d="M188.4 252.9L188.4 280.9L182.2 294.7L182.2 272.0Z" fill="#363d6c"/>
<path d="M187.8 270.2L187.7 273.0L187.5 275.4L187.2 277.0L186.9 277.5L186.5 277.0L186.2 275.4L186.0 273.0L186.0 270.2L186.0 267.4L186.2 265.0L186.5 263.4L186.9 262.9L187.2 263.4L187.5 265.0L187.7 267.4Z" fill="#f4f4f4"/>
<path d="M187.2 271.9L187.1 274.6L186.9 276.9L186.6 278.5L186.3 279.0L185.9 278.5L185.6 276.9L185.4 274.6L185.4 271.9L185.4 269.1L185.6 266.8L185.9 265.2L186.3 264.7L186.6 265.2L186.9 266.8L187.1 269.1Z" fill="#f4f4f4"/>
<path d="M186.6 273.4L186.5 276.1L186.3 278.4L186.0 280.0L185.7 280.5L185.3 280.0L185.0 278.4L184.8 276.1L184.8 273.4L184.8 270.7L185.0 268.5L185.3 266.9L185.7 266.4L186.0 266.9L186.3 268.5L186.5 270.7Z" fill="#f4f4f4"/>
<path d="M186.0 275.0L185.9 277.6L185.7 279.9L185.4 281.4L185.1 281.9L184.7 281.4L184.4 279.9L184.3 277.6L184.2 275.0L184.3 272.3L184.4 270.1L184.7 268.6L185.1 268.1L185.4 268.6L185.7 270.1L185.9 272.3Z" fill="#f4f4f4"/>
<path d="M185.4 276.5L185.4 279.1L185.2 281.3L184.9 282.7L184.5 283.2L184.2 282.7L183.9 281.3L183.7 279.1L183.6 276.5L183.7 273.9L183.9 271.7L184.2 270.2L184.5 269.7L184.9 270.2L185.2 271.7L185.4 273.9Z" fill="#f4f4f4"/>
<path d="M184.9 277.9L184.8 280.4L184.6 282.6L184.3 284.0L184.0 284.5L183.7 284.0L183.4 282.6L183.2 280.4L183.1 277.9L183.2 275.3L183.4 273.2L183.7 271.7L184.0 271.2L184.3 271.7L184.6 273.2L184.8 275.3Z" fill="#f4f4f4"/>
<path d="M184.4 279.2L184.3 281.8L184.1 283.9L183.8 285.3L183.5 285.8L183.1 285.3L182.8 283.9L182.7 281.8L182.6 279.2L182.7 276.7L182.8 274.6L183.1 273.2L183.5 272.7L183.8 273.2L184.1 274.6L184.3 276.7Z" fill="#f4f4f4"/>
<path d="M183.9 280.6L183.8 283.0L183.6 285.1L183.3 286.5L183.0 287.0L182.6 286.5L182.4 285.1L182.2 283.0L182.1 280.6L182.2 278.1L182.4 276.0L182.6 274.6L183.0 274.1L183.3 274.6L183.6 276.0L183.8 278.1Z" fill="#f4f4f4"/>
<path d="M185.2 253.0L188.4 252.9L182.2 272.0L179.6 272.0Z" fill="#6676cf"/>
<path d="M185.2 280.9L191.6 280.8L184.8 294.6L179.6 294.7Z" fill="#6676cf"/>
<path d="M301.0 251.7L301.0 279.9L273.5 293.9L273.5 271.0Z" fill="#363d6c"/>
<path d="M295.5 269.2L295.5 272.0L295.2 274.3L294.8 275.9L294.4 276.5L294.0 275.9L293.6 274.3L293.4 272.0L293.3 269.2L293.4 266.3L293.6 264.0L294.0 262.4L294.4 261.8L294.8 262.4L295.2 264.0L295.5 266.3Z" fill="#f4f4f4"/>
<path d="M292.8 270.8L292.7 273.6L292.4 275.9L292.1 277.5L291.7 278.0L291.2 277.5L290.9 275.9L290.6 273.6L290.6 270.8L290.6 268.1L290.9 265.7L291.2 264.2L291.7 263.6L292.1 264.2L292.4 265.7L292.7 268.1Z" fill="#f4f4f4"/>
<path d="M290.1 272.4L290.0 275.1L289.8 277.4L289.4 279.0L289.0 279.5L288.6 279.0L288.3 277.4L288.0 275.1L288.0 272.4L288.0 269.7L288.3 267.5L288.6 265.9L289.0 265.4L289.4 265.9L289.8 267.5L290.0 269.7Z" fill="#f4f4f4"/>
<path d="M287.5 274.0L287.4 276.6L287.2 278.9L286.9 280.4L286.5 280.9L286.1 280.4L285.8 278.9L285.5 276.6L285.5 274.0L285.5 271.3L285.8 269.1L286.1 267.6L286.5 267.1L286.9 267.6L287.2 269.1L287.4 271.3Z" fill="#f4f4f4"/>
<path d="M285.0 275.5L284.9 278.1L284.7 280.3L284.4 281.8L284.0 282.3L283.7 281.8L283.3 280.3L283.1 278.1L283.1 275.5L283.1 272.9L283.3 270.7L283.7 269.2L284.0 268.7L284.4 269.2L284.7 270.7L284.9 272.9Z" fill="#f4f4f4"/>
<path d="M282.6 276.9L282.5 279.5L282.3 281.6L282.0 283.1L281.7 283.6L281.3 283.1L281.0 281.6L280.8 279.5L280.7 276.9L280.8 274.4L281.0 272.2L281.3 270.8L281.7 270.3L282.0 270.8L282.3 272.2L282.5 274.4Z" fill="#f4f4f4"/>
<path d="M280.3 278.3L280.2 280.8L280.0 282.9L279.7 284.4L279.4 284.9L279.1 284.4L278.8 282.9L278.6 280.8L278.5 278.3L278.6 275.8L278.8 273.7L279.1 272.3L279.4 271.8L279.7 272.3L280.0 273.7L280.2 275.8Z" fill="#f4f4f4"/>
<path d="M278.1 279.7L278.0 282.1L277.8 284.2L277.6 285.6L277.2 286.1L276.9 285.6L276.6 284.2L276.4 282.1L276.3 279.7L276.4 277.2L276.6 275.1L276.9 273.7L277.2 273.2L277.6 273.7L277.8 275.1L278.0 277.2Z" fill="#f4f4f4"/>
<path d="M298.8 251.7L301.0 251.7L273.5 271.0L271.8 271.0Z" fill="#6676cf"/>
<path d="M298.8 280.0L303.2 279.9L275.3 293.9L271.8 293.9Z" fill="#6676cf"/>
<path d="M414.9 250.4L414.9 279.0L366.0 293.2L366.0 270.0Z" fill="#363d6c"/>
<path d="M405.2 268.1L405.1 270.9L404.6 273.3L404.0 274.9L403.2 275.5L402.4 274.9L401.8 273.3L401.4 270.9L401.2 268.1L401.4 265.3L401.8 262.9L402.4 261.3L403.2 260.8L404.0 261.3L404.6 262.9L405.1 265.3Z" fill="#ffffff"/>
<path d="M400.2 269.8L400.1 272.6L399.7 274.9L399.0 276.5L398.3 277.0L397.6 276.5L396.9 274.9L396.5 272.6L396.4 269.8L396.5 267.1L396.9 264.7L397.6 263.2L398.3 262.6L399.0 263.2L399.7 264.7L400.1 267.1Z" fill="#ffffff"/>
<path d="M395.4 271.5L395.3 274.2L394.9 276.4L394.3 278.0L393.6 278.5L392.9 278.0L392.3 276.4L391.9 274.2L391.7 271.5L391.9 268.8L392.3 266.5L392.9 264.9L393.6 264.4L394.3 264.9L394.9 266.5L395.3 268.8Z" fill="#ffffff"/>
<path d="M390.8 273.0L390.7 275.7L390.3 277.9L389.7 279.4L389.1 279.9L388.4 279.4L387.8 277.9L387.4 275.7L387.3 273.0L387.4 270.4L387.8 268.1L388.4 266.6L389.1 266.1L389.7 266.6L390.3 268.1L390.7 270.4Z" fill="#ffffff"/>
<path d="M386.4 274.5L386.3 277.1L385.9 279.3L385.4 280.8L384.7 281.3L384.0 280.8L383.5 279.3L383.1 277.1L383.0 274.5L383.1 271.9L383.5 269.7L384.0 268.3L384.7 267.7L385.4 268.3L385.9 269.7L386.3 271.9Z" fill="#ffffff"/>
<path d="M382.2 276.0L382.0 278.5L381.7 280.7L381.1 282.2L380.5 282.7L379.9 282.2L379.3 280.7L379.0 278.5L378.8 276.0L379.0 273.4L379.3 271.3L379.9 269.8L380.5 269.3L381.1 269.8L381.7 271.3L382.0 273.4Z" fill="#ffffff"/>
<path d="M378.0 277.4L377.9 279.9L377.6 282.0L377.1 283.4L376.4 283.9L375.8 283.4L375.3 282.0L375.0 279.9L374.8 277.4L375.0 274.9L375.3 272.8L375.8 271.4L376.4 270.9L377.1 271.4L377.6 272.8L377.9 274.9Z" fill="#ffffff"/>
<path d="M374.1 278.8L374.0 281.2L373.6 283.3L373.1 284.7L372.5 285.2L371.9 284.7L371.4 283.3L371.1 281.2L371.0 278.8L371.1 276.3L371.4 274.2L371.9 272.8L372.5 272.3L373.1 272.8L373.6 274.2L374.0 276.3Z" fill="#ffffff"/>
<path d="M413.3 250.4L414.9 250.4L366.0 270.0L364.6 270.0Z" fill="#6676cf"/>
<path d="M413.3 279.1L416.6 279.0L367.3 293.2L364.6 293.2Z" fill="#6676cf"/>
<path d="M36.5 254.7L398.0 250.6L398.0 279.2L36.5 282.1ZM140.4 266.8L139.9 269.6L138.5 272.2L136.2 274.0L133.5 275.0L130.6 275.0L127.9 274.0L125.6 272.2L124.2 269.6L123.7 266.8L124.2 263.9L125.6 261.4L127.9 259.5L130.6 258.5L133.5 258.5L136.2 259.5L138.5 261.4L139.9 263.9ZM165.2 266.5L164.6 269.4L163.2 271.9L161.0 273.8L158.2 274.8L155.3 274.8L152.6 273.8L150.4 271.9L148.9 269.4L148.4 266.5L148.9 263.7L150.4 261.2L152.6 259.3L155.3 258.3L158.2 258.3L161.0 259.3L163.2 261.2L164.6 263.7ZM190.0 266.3L189.5 269.2L188.1 271.7L185.8 273.5L183.1 274.5L180.2 274.5L177.5 273.5L175.2 271.7L173.8 269.2L173.3 266.3L173.8 263.4L175.2 260.9L177.5 259.0L180.2 258.0L183.1 258.0L185.8 259.0L188.1 260.9L189.5 263.4ZM215.0 266.0L214.5 268.9L213.1 271.4L210.9 273.3L208.1 274.3L205.2 274.3L202.5 273.3L200.3 271.4L198.8 268.9L198.3 266.0L198.8 263.2L200.3 260.7L202.5 258.8L205.2 257.8L208.1 257.8L210.9 258.8L213.1 260.7L214.5 263.2ZM240.2 265.8L239.7 268.7L238.2 271.2L236.0 273.1L233.3 274.0L230.4 274.0L227.6 273.1L225.4 271.2L224.0 268.7L223.4 265.8L224.0 262.9L225.4 260.4L227.6 258.5L230.4 257.6L233.3 257.6L236.0 258.5L238.2 260.4L239.7 262.9ZM265.5 265.6L265.0 268.4L263.5 270.9L261.3 272.8L258.6 273.8L255.7 273.8L252.9 272.8L250.7 270.9L249.2 268.4L248.7 265.6L249.2 262.7L250.7 260.2L252.9 258.3L255.7 257.3L258.6 257.3L261.3 258.3L263.5 260.2L265.0 262.7ZM290.9 265.3L290.4 268.2L289.0 270.7L286.7 272.6L284.0 273.6L281.1 273.6L278.4 272.6L276.1 270.7L274.7 268.2L274.2 265.3L274.7 262.4L276.1 259.9L278.4 258.1L281.1 257.1L284.0 257.1L286.7 258.1L289.0 259.9L290.4 262.4ZM316.5 265.1L316.0 267.9L314.5 270.4L312.3 272.3L309.6 273.3L306.7 273.3L303.9 272.3L301.7 270.4L300.3 267.9L299.7 265.1L300.3 262.2L301.7 259.7L303.9 257.8L306.7 256.8L309.6 256.8L312.3 257.8L314.5 259.7L316.0 262.2ZM342.2 264.8L341.7 267.7L340.2 270.2L338.0 272.1L335.3 273.1L332.4 273.1L329.6 272.1L327.4 270.2L326.0 267.7L325.5 264.8L326.0 262.0L327.4 259.4L329.6 257.6L332.4 256.6L335.3 256.6L338.0 257.6L340.2 259.4L341.7 262.0ZM368.1 264.6L367.5 267.4L366.1 270.0L363.9 271.8L361.1 272.8L358.2 272.8L355.5 271.8L353.3 270.0L351.8 267.4L351.3 264.6L351.8 261.7L353.3 259.2L355.5 257.3L358.2 256.3L361.1 256.3L363.9 257.3L366.1 259.2L367.5 261.7ZM394.0 264.3L393.5 267.2L392.1 269.7L389.9 271.6L387.1 272.6L384.2 272.6L381.5 271.6L379.3 269.7L377.8 267.2L377.3 264.3L377.8 261.5L379.3 258.9L381.5 257.1L384.2 256.1L387.1 256.1L389.9 257.1L392.1 258.9L393.5 261.5Z" fill="#4f5a98" fill-rule="evenodd"/>
<path d="M36.5 254.7L398.0 250.6L398.0 251.9L36.5 256.0Z" fill="#5f6dc6"/>
<path d="M36.5 280.8L398.0 277.8L398.0 279.8L36.5 282.7Z" fill="#5f6dc6"/>
<rect x="73.3" y="252.8" width="9.5" height="161.2" fill="#3d4a8c"/>
<rect x="82.5" y="252.8" width="10.3" height="161.2" fill="#4f5b99"/>
<rect x="73.3" y="252.8" width="19.2" height="3.1" fill="#5864a8"/>
<rect x="397.0" y="248.5" width="4.4" height="167.9" fill="#4f5b99"/>
<rect x="401.1" y="248.5" width="10.2" height="167.9" fill="#3d4a8c"/>
<rect x="411.0" y="248.5" width="7.2" height="167.9" fill="#4f5b99"/>
<rect x="417.9" y="248.5" width="4.9" height="167.9" fill="#7880b0"/>
<path d="M53.7 436.0h11.7v6.1h-11.7Z M59.5 433.0v9.1" fill="none" stroke="#858585" stroke-width="1"/>
<path d="M484.7 438.7h11.7v6.1h-11.7Z M490.5 435.7v9.1" fill="none" stroke="#858585" stroke-width="1"/>
<path d="M62.1 225.1L62.1 260.7L83.2 281.7L83.2 254.1Z" fill="#363d6c"/>
<path d="M68.3 248.3L68.2 251.9L68.0 254.9L67.7 257.0L67.3 257.7L67.0 257.0L66.7 254.9L66.5 251.9L66.4 248.3L66.5 244.7L66.7 241.7L67.0 239.7L67.3 239.0L67.7 239.7L68.0 241.7L68.2 244.7Z" fill="#c9cde0"/>
<path d="M70.4 250.9L70.3 254.4L70.1 257.4L69.8 259.3L69.5 260.0L69.2 259.3L68.9 257.4L68.7 254.4L68.6 250.9L68.7 247.4L68.9 244.4L69.2 242.5L69.5 241.8L69.8 242.5L70.1 244.4L70.3 247.4Z" fill="#c9cde0"/>
<path d="M72.4 253.3L72.4 256.8L72.2 259.7L71.9 261.6L71.5 262.3L71.2 261.6L70.9 259.7L70.7 256.8L70.6 253.3L70.7 249.9L70.9 247.0L71.2 245.1L71.5 244.4L71.9 245.1L72.2 247.0L72.4 249.9Z" fill="#c9cde0"/>
<path d="M74.4 255.7L74.3 259.0L74.1 261.8L73.8 263.7L73.5 264.4L73.1 263.7L72.8 261.8L72.7 259.0L72.6 255.7L72.7 252.3L72.8 249.5L73.1 247.6L73.5 247.0L73.8 247.6L74.1 249.5L74.3 252.3Z" fill="#c9cde0"/>
<path d="M76.2 257.9L76.2 261.2L76.0 263.9L75.7 265.8L75.3 266.4L75.0 265.8L74.7 263.9L74.5 261.2L74.4 257.9L74.5 254.7L74.7 251.9L75.0 250.0L75.3 249.4L75.7 250.0L76.0 251.9L76.2 254.7Z" fill="#c9cde0"/>
<path d="M78.0 260.0L78.0 263.2L77.8 265.9L77.5 267.7L77.1 268.4L76.8 267.7L76.5 265.9L76.3 263.2L76.2 260.0L76.3 256.9L76.5 254.2L76.8 252.3L77.1 251.7L77.5 252.3L77.8 254.2L78.0 256.9Z" fill="#c9cde0"/>
<path d="M79.7 262.1L79.7 265.2L79.5 267.8L79.2 269.6L78.8 270.2L78.5 269.6L78.2 267.8L78.0 265.2L77.9 262.1L78.0 259.0L78.2 256.3L78.5 254.6L78.8 253.9L79.2 254.6L79.5 256.3L79.7 259.0Z" fill="#c9cde0"/>
<path d="M81.4 264.0L81.3 267.1L81.1 269.7L80.8 271.4L80.5 272.0L80.1 271.4L79.8 269.7L79.6 267.1L79.6 264.0L79.6 261.0L79.8 258.4L80.1 256.7L80.5 256.1L80.8 256.7L81.1 258.4L81.3 261.0Z" fill="#c9cde0"/>
<path d="M58.8 225.2L62.1 225.1L83.2 254.1L80.5 254.2Z" fill="#6676cf"/>
<path d="M58.8 260.8L65.5 260.7L85.8 281.7L80.5 281.7Z" fill="#6676cf"/>
<path d="M197.9 223.6L197.9 259.6L188.4 280.9L188.4 252.9Z" fill="#363d6c"/>
<path d="M196.4 247.0L196.4 250.6L196.2 253.7L195.9 255.7L195.5 256.4L195.2 255.7L194.9 253.7L194.7 250.6L194.6 247.0L194.7 243.5L194.9 240.4L195.2 238.4L195.5 237.7L195.9 238.4L196.2 240.4L196.4 243.5Z" fill="#f4f4f4"/>
<path d="M195.5 249.7L195.4 253.1L195.2 256.1L194.9 258.1L194.6 258.8L194.2 258.1L193.9 256.1L193.7 253.1L193.7 249.7L193.7 246.2L193.9 243.2L194.2 241.2L194.6 240.5L194.9 241.2L195.2 243.2L195.4 246.2Z" fill="#f4f4f4"/>
<path d="M194.5 252.1L194.5 255.5L194.3 258.4L194.0 260.4L193.6 261.1L193.3 260.4L193.0 258.4L192.8 255.5L192.7 252.1L192.8 248.7L193.0 245.8L193.3 243.9L193.6 243.2L194.0 243.9L194.3 245.8L194.5 248.7Z" fill="#f4f4f4"/>
<path d="M193.7 254.5L193.6 257.8L193.4 260.7L193.1 262.5L192.8 263.2L192.4 262.5L192.1 260.7L191.9 257.8L191.9 254.5L191.9 251.2L192.1 248.3L192.4 246.4L192.8 245.8L193.1 246.4L193.4 248.3L193.6 251.2Z" fill="#f4f4f4"/>
<path d="M192.8 256.8L192.7 260.0L192.5 262.8L192.3 264.6L191.9 265.3L191.6 264.6L191.3 262.8L191.1 260.0L191.0 256.8L191.1 253.5L191.3 250.7L191.6 248.9L191.9 248.2L192.3 248.9L192.5 250.7L192.7 253.5Z" fill="#f4f4f4"/>
<path d="M192.0 258.9L191.9 262.1L191.7 264.8L191.4 266.6L191.1 267.2L190.8 266.6L190.5 264.8L190.3 262.1L190.2 258.9L190.3 255.7L190.5 253.0L190.8 251.2L191.1 250.6L191.4 251.2L191.7 253.0L191.9 255.7Z" fill="#f4f4f4"/>
<path d="M191.2 261.0L191.2 264.1L191.0 266.7L190.7 268.5L190.3 269.1L190.0 268.5L189.7 266.7L189.5 264.1L189.4 261.0L189.5 257.9L189.7 255.2L190.0 253.4L190.3 252.8L190.7 253.4L191.0 255.2L191.2 257.9Z" fill="#f4f4f4"/>
<path d="M190.5 262.9L190.4 266.0L190.2 268.6L189.9 270.3L189.6 270.9L189.2 270.3L189.0 268.6L188.8 266.0L188.7 262.9L188.8 259.9L189.0 257.3L189.2 255.6L189.6 255.0L189.9 255.6L190.2 257.3L190.4 259.9Z" fill="#f4f4f4"/>
<path d="M193.8 223.6L197.9 223.6L188.4 252.9L185.2 253.0Z" fill="#6676cf"/>
<path d="M193.8 259.6L202.0 259.6L191.6 280.8L185.2 280.9Z" fill="#6676cf"/>
<path d="M343.3 221.9L343.3 258.4L301.0 279.9L301.0 251.7Z" fill="#363d6c"/>
<path d="M334.6 245.7L334.4 249.3L334.0 252.3L333.5 254.4L332.8 255.1L332.1 254.4L331.5 252.3L331.1 249.3L331.0 245.7L331.1 242.1L331.5 239.1L332.1 237.1L332.8 236.4L333.5 237.1L334.0 239.1L334.4 242.1Z" fill="#f4f4f4"/>
<path d="M330.2 248.4L330.0 251.8L329.7 254.8L329.1 256.8L328.5 257.5L327.8 256.8L327.3 254.8L326.9 251.8L326.8 248.4L326.9 244.9L327.3 241.9L327.8 239.9L328.5 239.2L329.1 239.9L329.7 241.9L330.0 244.9Z" fill="#f4f4f4"/>
<path d="M326.0 250.9L325.8 254.3L325.5 257.2L325.0 259.1L324.3 259.8L323.7 259.1L323.2 257.2L322.9 254.3L322.7 250.9L322.9 247.4L323.2 244.6L323.7 242.6L324.3 241.9L325.0 242.6L325.5 244.6L325.8 247.4Z" fill="#f4f4f4"/>
<path d="M322.0 253.3L321.9 256.6L321.5 259.4L321.0 261.3L320.4 262.0L319.8 261.3L319.3 259.4L319.0 256.6L318.9 253.3L319.0 249.9L319.3 247.1L319.8 245.2L320.4 244.5L321.0 245.2L321.5 247.1L321.9 249.9Z" fill="#f4f4f4"/>
<path d="M318.2 255.5L318.1 258.8L317.7 261.6L317.3 263.4L316.7 264.1L316.1 263.4L315.6 261.6L315.3 258.8L315.2 255.5L315.3 252.3L315.6 249.5L316.1 247.7L316.7 247.0L317.3 247.7L317.7 249.5L318.1 252.3Z" fill="#f4f4f4"/>
<path d="M314.5 257.7L314.4 260.9L314.1 263.6L313.7 265.4L313.1 266.0L312.6 265.4L312.1 263.6L311.8 260.9L311.7 257.7L311.8 254.5L312.1 251.8L312.6 250.0L313.1 249.4L313.7 250.0L314.1 251.8L314.4 254.5Z" fill="#f4f4f4"/>
<path d="M311.0 259.8L310.9 262.9L310.7 265.6L310.2 267.3L309.7 268.0L309.2 267.3L308.7 265.6L308.4 262.9L308.3 259.8L308.4 256.7L308.7 254.1L309.2 252.3L309.7 251.7L310.2 252.3L310.7 254.1L310.9 256.7Z" fill="#f4f4f4"/>
<path d="M307.7 261.8L307.6 264.9L307.3 267.4L306.9 269.2L306.4 269.8L305.9 269.2L305.5 267.4L305.2 264.9L305.1 261.8L305.2 258.8L305.5 256.2L305.9 254.4L306.4 253.8L306.9 254.4L307.3 256.2L307.6 258.8Z" fill="#f4f4f4"/>
<path d="M340.4 222.0L343.3 221.9L301.0 251.7L298.8 251.7Z" fill="#6676cf"/>
<path d="M340.4 258.4L346.1 258.4L303.2 279.9L298.8 280.0Z" fill="#6676cf"/>
<path d="M490.3 220.3L490.3 257.3L414.9 279.0L414.9 250.4Z" fill="#363d6c"/>
<path d="M474.8 244.4L474.5 248.0L473.8 251.0L472.8 253.1L471.6 253.8L470.4 253.1L469.4 251.0L468.7 248.0L468.5 244.4L468.7 240.8L469.4 237.8L470.4 235.8L471.6 235.0L472.8 235.8L473.8 237.8L474.5 240.8Z" fill="#ffffff"/>
<path d="M466.9 247.1L466.7 250.6L466.0 253.5L465.1 255.5L463.9 256.2L462.8 255.5L461.8 253.5L461.2 250.6L460.9 247.1L461.2 243.6L461.8 240.6L462.8 238.6L463.9 237.9L465.1 238.6L466.0 240.6L466.7 243.6Z" fill="#ffffff"/>
<path d="M459.4 249.6L459.2 253.0L458.6 255.9L457.7 257.8L456.6 258.5L455.5 257.8L454.6 255.9L454.0 253.0L453.7 249.6L454.0 246.2L454.6 243.3L455.5 241.4L456.6 240.7L457.7 241.4L458.6 243.3L459.2 246.2Z" fill="#ffffff"/>
<path d="M452.3 252.0L452.1 255.4L451.5 258.2L450.7 260.1L449.6 260.7L448.6 260.1L447.7 258.2L447.1 255.4L446.9 252.0L447.1 248.7L447.7 245.9L448.6 244.0L449.6 243.3L450.7 244.0L451.5 245.9L452.1 248.7Z" fill="#ffffff"/>
<path d="M445.5 254.3L445.3 257.6L444.8 260.4L443.9 262.2L442.9 262.9L441.9 262.2L441.1 260.4L440.5 257.6L440.3 254.3L440.5 251.1L441.1 248.3L441.9 246.5L442.9 245.8L443.9 246.5L444.8 248.3L445.3 251.1Z" fill="#ffffff"/>
<path d="M439.1 256.6L438.9 259.7L438.3 262.4L437.5 264.2L436.6 264.9L435.6 264.2L434.8 262.4L434.3 259.7L434.1 256.6L434.3 253.4L434.8 250.7L435.6 248.9L436.6 248.2L437.5 248.9L438.3 250.7L438.9 253.4Z" fill="#ffffff"/>
<path d="M432.9 258.7L432.7 261.8L432.2 264.4L431.4 266.2L430.5 266.8L429.6 266.2L428.8 264.4L428.3 261.8L428.1 258.7L428.3 255.6L428.8 252.9L429.6 251.1L430.5 250.5L431.4 251.1L432.2 252.9L432.7 255.6Z" fill="#ffffff"/>
<path d="M426.9 260.7L426.7 263.7L426.2 266.3L425.5 268.1L424.6 268.7L423.8 268.1L423.0 266.3L422.5 263.7L422.3 260.7L422.5 257.6L423.0 255.1L423.8 253.3L424.6 252.7L425.5 253.3L426.2 255.1L426.7 257.6Z" fill="#ffffff"/>
<path d="M488.1 220.4L490.3 220.3L414.9 250.4L413.3 250.4Z" fill="#6676cf"/>
<path d="M488.1 257.3L492.5 257.2L416.6 279.0L413.3 279.1Z" fill="#6676cf"/>
<path d="M36.5 225.4L473.2 220.5L473.2 257.4L36.5 260.9ZM136.0 241.4L135.4 245.1L133.5 248.4L130.6 250.8L127.1 252.1L123.3 252.1L119.8 250.8L116.9 248.4L115.1 245.1L114.4 241.4L115.1 237.7L116.9 234.5L119.8 232.1L123.3 230.8L127.1 230.8L130.6 232.1L133.5 234.5L135.4 237.7ZM168.0 241.1L167.3 244.8L165.4 248.1L162.6 250.5L159.0 251.8L155.3 251.8L151.7 250.5L148.9 248.1L147.0 244.8L146.3 241.1L147.0 237.4L148.9 234.2L151.7 231.8L155.3 230.5L159.0 230.5L162.6 231.8L165.4 234.2L167.3 237.4ZM200.1 240.8L199.4 244.5L197.5 247.8L194.7 250.2L191.1 251.4L187.4 251.4L183.8 250.2L181.0 247.8L179.1 244.5L178.4 240.8L179.1 237.1L181.0 233.9L183.8 231.4L187.4 230.2L191.1 230.2L194.7 231.4L197.5 233.9L199.4 237.1ZM232.3 240.5L231.7 244.2L229.8 247.4L226.9 249.8L223.4 251.1L219.7 251.1L216.1 249.8L213.3 247.4L211.4 244.2L210.7 240.5L211.4 236.8L213.3 233.5L216.1 231.1L219.7 229.8L223.4 229.8L226.9 231.1L229.8 233.5L231.7 236.8ZM264.8 240.2L264.2 243.9L262.3 247.1L259.4 249.5L255.9 250.8L252.1 250.8L248.6 249.5L245.7 247.1L243.8 243.9L243.2 240.2L243.8 236.5L245.7 233.2L248.6 230.8L252.1 229.5L255.9 229.5L259.4 230.8L262.3 233.2L264.2 236.5ZM297.4 239.9L296.8 243.6L294.9 246.8L292.0 249.2L288.5 250.5L284.8 250.5L281.2 249.2L278.4 246.8L276.5 243.6L275.8 239.9L276.5 236.2L278.4 232.9L281.2 230.5L284.8 229.2L288.5 229.2L292.0 230.5L294.9 232.9L296.8 236.2ZM330.3 239.5L329.6 243.2L327.7 246.5L324.9 248.9L321.3 250.2L317.6 250.2L314.1 248.9L311.2 246.5L309.3 243.2L308.7 239.5L309.3 235.8L311.2 232.6L314.1 230.2L317.6 228.9L321.3 228.9L324.9 230.2L327.7 232.6L329.6 235.8ZM363.3 239.2L362.6 242.9L360.7 246.2L357.9 248.6L354.3 249.9L350.6 249.9L347.1 248.6L344.2 246.2L342.3 242.9L341.7 239.2L342.3 235.5L344.2 232.3L347.1 229.9L350.6 228.6L354.3 228.6L357.9 229.9L360.7 232.3L362.6 235.5ZM396.5 238.9L395.8 242.6L393.9 245.9L391.1 248.3L387.5 249.5L383.8 249.5L380.2 248.3L377.4 245.9L375.5 242.6L374.8 238.9L375.5 235.2L377.4 232.0L380.2 229.5L383.8 228.3L387.5 228.3L391.1 229.5L393.9 232.0L395.8 235.2ZM429.8 238.6L429.2 242.3L427.3 245.5L424.4 247.9L420.9 249.2L417.1 249.2L413.6 247.9L410.7 245.5L408.9 242.3L408.2 238.6L408.9 234.9L410.7 231.6L413.6 229.2L417.1 227.9L420.9 227.9L424.4 229.2L427.3 231.6L429.2 234.9ZM463.4 238.3L462.7 242.0L460.8 245.2L458.0 247.6L454.4 248.9L450.7 248.9L447.1 247.6L444.3 245.2L442.4 242.0L441.7 238.3L442.4 234.6L444.3 231.3L447.1 228.9L450.7 227.6L454.4 227.6L458.0 228.9L460.8 231.3L462.7 234.6Z" fill="#4f5a98" fill-rule="evenodd"/>
<path d="M36.5 225.4L473.2 220.5L473.2 222.1L36.5 226.9Z" fill="#5f6dc6"/>
<path d="M36.5 259.4L473.2 255.8L473.2 258.0L36.5 261.5Z" fill="#5f6dc6"/>
<rect x="45.4" y="223.4" width="15.1" height="209.4" fill="#3d4a8c"/>
<rect x="60.2" y="223.4" width="13.4" height="209.4" fill="#4f5b99"/>
<rect x="45.4" y="223.4" width="27.9" height="3.7" fill="#5864a8"/>
<rect x="472.2" y="217.8" width="7.4" height="218.2" fill="#4f5b99"/>
<rect x="479.3" y="217.8" width="14.4" height="218.2" fill="#3d4a8c"/>
<rect x="493.4" y="217.8" width="6.7" height="218.2" fill="#4f5b99"/>
<rect x="499.7" y="217.8" width="8.1" height="218.2" fill="#7880b0"/>
<path d="M9.5 473.0h15.0v7.5h-15.0Z M17.0 470.0v10.5" fill="none" stroke="#858585" stroke-width="1"/>
<path d="M638.5 477.0h15.0v7.5h-15.0Z M646.0 474.0v10.5" fill="none" stroke="#858585" stroke-width="1"/>
<path d="M19.0 165.6L19.0 217.6L62.1 260.7L62.1 225.1Z" fill="#363d6c"/>
<path d="M32.7 204.4L32.5 209.5L32.1 213.8L31.5 216.7L30.7 217.7L30.0 216.7L29.4 213.8L28.9 209.5L28.8 204.4L28.9 199.4L29.4 195.1L30.0 192.2L30.7 191.2L31.5 192.2L32.1 195.1L32.5 199.4Z" fill="#c9cde0"/>
<path d="M37.2 210.0L37.0 214.8L36.6 219.0L36.0 221.8L35.3 222.7L34.7 221.8L34.1 219.0L33.7 214.8L33.5 210.0L33.7 205.1L34.1 200.9L34.7 198.2L35.3 197.2L36.0 198.2L36.6 200.9L37.0 205.1Z" fill="#c9cde0"/>
<path d="M41.3 215.1L41.2 219.8L40.8 223.8L40.3 226.5L39.6 227.4L39.0 226.5L38.4 223.8L38.1 219.8L37.9 215.1L38.1 210.4L38.4 206.4L39.0 203.7L39.6 202.8L40.3 203.7L40.8 206.4L41.2 210.4Z" fill="#c9cde0"/>
<path d="M45.2 219.9L45.1 224.4L44.7 228.3L44.2 230.9L43.6 231.8L43.0 230.9L42.5 228.3L42.2 224.4L42.0 219.9L42.2 215.3L42.5 211.5L43.0 208.9L43.6 208.0L44.2 208.9L44.7 211.5L45.1 215.3Z" fill="#c9cde0"/>
<path d="M48.8 224.3L48.7 228.7L48.4 232.5L47.9 235.0L47.3 235.8L46.8 235.0L46.3 232.5L46.0 228.7L45.9 224.3L46.0 219.9L46.3 216.2L46.8 213.7L47.3 212.9L47.9 213.7L48.4 216.2L48.7 219.9Z" fill="#c9cde0"/>
<path d="M52.2 228.5L52.1 232.8L51.8 236.4L51.4 238.8L50.8 239.6L50.3 238.8L49.8 236.4L49.6 232.8L49.4 228.5L49.6 224.3L49.8 220.7L50.3 218.2L50.8 217.4L51.4 218.2L51.8 220.7L52.1 224.3Z" fill="#c9cde0"/>
<path d="M55.4 232.4L55.3 236.6L55.0 240.1L54.6 242.4L54.1 243.2L53.6 242.4L53.2 240.1L52.9 236.6L52.8 232.4L52.9 228.3L53.2 224.8L53.6 222.5L54.1 221.7L54.6 222.5L55.0 224.8L55.3 228.3Z" fill="#c9cde0"/>
<path d="M58.4 236.1L58.3 240.1L58.0 243.5L57.6 245.8L57.2 246.6L56.7 245.8L56.3 243.5L56.0 240.1L55.9 236.1L56.0 232.1L56.3 228.7L56.7 226.5L57.2 225.7L57.6 226.5L58.0 228.7L58.3 232.1Z" fill="#c9cde0"/>
<path d="M14.1 165.6L19.0 165.6L62.1 225.1L58.8 225.2Z" fill="#6676cf"/>
<path d="M14.1 217.7L23.9 217.6L65.5 260.7L58.8 260.8Z" fill="#6676cf"/>
<path d="M217.5 163.3L217.5 216.0L197.9 259.6L197.9 223.6Z" fill="#363d6c"/>
<path d="M213.1 202.6L213.0 207.7L212.8 212.0L212.5 214.9L212.2 215.9L211.8 214.9L211.5 212.0L211.3 207.7L211.3 202.6L211.3 197.6L211.5 193.3L211.8 190.4L212.2 189.4L212.5 190.4L212.8 193.3L213.0 197.6Z" fill="#f4f4f4"/>
<path d="M211.0 208.2L210.9 213.1L210.7 217.2L210.4 220.0L210.1 221.0L209.7 220.0L209.4 217.2L209.2 213.1L209.2 208.2L209.2 203.3L209.4 199.2L209.7 196.4L210.1 195.5L210.4 196.4L210.7 199.2L210.9 203.3Z" fill="#f4f4f4"/>
<path d="M209.0 213.4L209.0 218.1L208.8 222.1L208.5 224.8L208.1 225.7L207.8 224.8L207.5 222.1L207.3 218.1L207.2 213.4L207.3 208.7L207.5 204.7L207.8 202.1L208.1 201.1L208.5 202.1L208.8 204.7L209.0 208.7Z" fill="#f4f4f4"/>
<path d="M207.2 218.3L207.1 222.8L207.0 226.7L206.7 229.2L206.3 230.1L206.0 229.2L205.7 226.7L205.5 222.8L205.4 218.3L205.5 213.7L205.7 209.9L206.0 207.3L206.3 206.4L206.7 207.3L207.0 209.9L207.1 213.7Z" fill="#f4f4f4"/>
<path d="M205.5 222.8L205.5 227.2L205.3 230.9L205.0 233.4L204.6 234.3L204.3 233.4L204.0 230.9L203.8 227.2L203.7 222.8L203.8 218.4L204.0 214.7L204.3 212.2L204.6 211.3L205.0 212.2L205.3 214.7L205.5 218.4Z" fill="#f4f4f4"/>
<path d="M203.9 227.0L203.9 231.3L203.7 234.9L203.4 237.3L203.0 238.1L202.7 237.3L202.4 234.9L202.2 231.3L202.1 227.0L202.2 222.7L202.4 219.1L202.7 216.7L203.0 215.9L203.4 216.7L203.7 219.1L203.9 222.7Z" fill="#f4f4f4"/>
<path d="M202.5 231.0L202.4 235.1L202.2 238.6L201.9 240.9L201.6 241.7L201.2 240.9L200.9 238.6L200.7 235.1L200.7 231.0L200.7 226.8L200.9 223.3L201.2 221.0L201.6 220.2L201.9 221.0L202.2 223.3L202.4 226.8Z" fill="#f4f4f4"/>
<path d="M201.1 234.7L201.0 238.7L200.8 242.1L200.5 244.3L200.2 245.1L199.8 244.3L199.5 242.1L199.3 238.7L199.3 234.7L199.3 230.7L199.5 227.3L199.8 225.0L200.2 224.2L200.5 225.0L200.8 227.3L201.0 230.7Z" fill="#f4f4f4"/>
<path d="M211.5 163.4L217.5 163.3L197.9 223.6L193.8 223.6Z" fill="#6676cf"/>
<path d="M211.5 216.0L223.5 215.9L202.0 259.6L193.8 259.6Z" fill="#6676cf"/>
<path d="M430.0 160.9L430.0 214.3L343.3 258.4L343.3 221.9Z" fill="#363d6c"/>
<path d="M410.2 200.7L409.9 205.8L409.1 210.1L407.9 213.0L406.4 214.0L404.9 213.0L403.7 210.1L402.9 205.8L402.6 200.7L402.9 195.7L403.7 191.4L404.9 188.5L406.4 187.5L407.9 188.5L409.1 191.4L409.9 195.7Z" fill="#f4f4f4"/>
<path d="M400.7 206.4L400.4 211.3L399.6 215.4L398.5 218.2L397.1 219.2L395.8 218.2L394.6 215.4L393.8 211.3L393.6 206.4L393.8 201.5L394.6 197.4L395.8 194.6L397.1 193.6L398.5 194.6L399.6 197.4L400.4 201.5Z" fill="#f4f4f4"/>
<path d="M391.8 211.7L391.6 216.4L390.9 220.4L389.8 223.0L388.5 224.0L387.2 223.0L386.2 220.4L385.4 216.4L385.2 211.7L385.4 207.0L386.2 203.0L387.2 200.3L388.5 199.4L389.8 200.3L390.9 203.0L391.6 207.0Z" fill="#f4f4f4"/>
<path d="M383.6 216.6L383.3 221.1L382.7 225.0L381.7 227.6L380.5 228.5L379.3 227.6L378.3 225.0L377.6 221.1L377.4 216.6L377.6 212.0L378.3 208.2L379.3 205.6L380.5 204.7L381.7 205.6L382.7 208.2L383.3 212.0Z" fill="#f4f4f4"/>
<path d="M375.9 221.1L375.7 225.5L375.0 229.3L374.1 231.8L373.0 232.6L371.9 231.8L371.0 229.3L370.3 225.5L370.1 221.1L370.3 216.7L371.0 213.0L371.9 210.5L373.0 209.7L374.1 210.5L375.0 213.0L375.7 216.7Z" fill="#f4f4f4"/>
<path d="M368.7 225.4L368.5 229.7L367.9 233.3L367.0 235.7L366.0 236.5L365.0 235.7L364.1 233.3L363.5 229.7L363.3 225.4L363.5 221.2L364.1 217.6L365.0 215.1L366.0 214.3L367.0 215.1L367.9 217.6L368.5 221.2Z" fill="#f4f4f4"/>
<path d="M362.0 229.4L361.8 233.6L361.2 237.1L360.4 239.4L359.4 240.2L358.5 239.4L357.6 237.1L357.1 233.6L356.9 229.4L357.1 225.3L357.6 221.8L358.5 219.5L359.4 218.7L360.4 219.5L361.2 221.8L361.8 225.3Z" fill="#f4f4f4"/>
<path d="M355.7 233.2L355.5 237.2L355.0 240.6L354.2 242.9L353.3 243.6L352.3 242.9L351.6 240.6L351.0 237.2L350.9 233.2L351.0 229.2L351.6 225.8L352.3 223.6L353.3 222.8L354.2 223.6L355.0 225.8L355.5 229.2Z" fill="#f4f4f4"/>
<path d="M425.9 161.0L430.0 160.9L343.3 221.9L340.4 222.0Z" fill="#6676cf"/>
<path d="M425.9 214.3L434.1 214.2L346.1 258.4L340.4 258.4Z" fill="#6676cf"/>
<path d="M645.0 158.6L645.0 212.6L490.3 257.3L490.3 220.3Z" fill="#363d6c"/>
<path d="M609.7 198.9L609.1 204.0L607.7 208.3L605.5 211.1L602.9 212.1L600.3 211.1L598.1 208.3L596.7 204.0L596.2 198.9L596.7 193.8L598.1 189.5L600.3 186.6L602.9 185.6L605.5 186.6L607.7 189.5L609.1 193.8Z" fill="#ffffff"/>
<path d="M592.6 204.6L592.2 209.5L590.8 213.6L588.8 216.4L586.4 217.4L584.0 216.4L581.9 213.6L580.6 209.5L580.1 204.6L580.6 199.7L581.9 195.6L584.0 192.8L586.4 191.9L588.8 192.8L590.8 195.6L592.2 199.7Z" fill="#ffffff"/>
<path d="M576.8 209.9L576.4 214.7L575.1 218.6L573.2 221.3L571.0 222.2L568.8 221.3L566.9 218.6L565.6 214.7L565.2 209.9L565.6 205.2L566.9 201.2L568.8 198.6L571.0 197.6L573.2 198.6L575.1 201.2L576.4 205.2Z" fill="#ffffff"/>
<path d="M562.2 214.9L561.7 219.4L560.6 223.3L558.8 225.9L556.7 226.8L554.6 225.9L552.9 223.3L551.7 219.4L551.3 214.9L551.7 210.4L552.9 206.5L554.6 203.9L556.7 203.0L558.8 203.9L560.6 206.5L561.7 210.4Z" fill="#ffffff"/>
<path d="M548.5 219.5L548.1 223.9L547.0 227.7L545.3 230.1L543.4 231.0L541.4 230.1L539.7 227.7L538.6 223.9L538.3 219.5L538.6 215.1L539.7 211.4L541.4 208.9L543.4 208.0L545.3 208.9L547.0 211.4L548.1 215.1Z" fill="#ffffff"/>
<path d="M535.6 223.9L535.3 228.1L534.2 231.7L532.7 234.1L530.9 235.0L529.0 234.1L527.5 231.7L526.4 228.1L526.1 223.9L526.4 219.6L527.5 216.0L529.0 213.6L530.9 212.7L532.7 213.6L534.2 216.0L535.3 219.6Z" fill="#ffffff"/>
<path d="M523.6 227.9L523.3 232.0L522.3 235.5L520.9 237.9L519.2 238.7L517.4 237.9L516.0 235.5L515.0 232.0L514.7 227.9L515.0 223.8L516.0 220.3L517.4 218.0L519.2 217.1L520.9 218.0L522.3 220.3L523.3 223.8Z" fill="#ffffff"/>
<path d="M512.4 231.7L512.1 235.7L511.1 239.1L509.8 241.4L508.1 242.2L506.5 241.4L505.2 239.1L504.2 235.7L503.9 231.7L504.2 227.7L505.2 224.3L506.5 222.1L508.1 221.3L509.8 222.1L511.1 224.3L512.1 227.7Z" fill="#ffffff"/>
<path d="M641.8 158.6L645.0 158.6L490.3 220.3L488.1 220.4Z" fill="#6676cf"/>
<path d="M641.8 212.6L648.2 212.5L492.5 257.2L488.1 257.3Z" fill="#6676cf"/>
<path d="M36.5 165.4L625.6 158.8L625.6 212.7L36.5 217.5ZM127.0 189.4L126.1 194.8L123.3 199.6L119.1 203.1L114.0 205.0L108.5 205.0L103.3 203.1L99.1 199.6L96.4 194.8L95.4 189.4L96.4 184.0L99.1 179.3L103.3 175.8L108.5 173.9L114.0 173.9L119.1 175.8L123.3 179.3L126.1 184.0ZM173.7 189.0L172.8 194.4L170.0 199.1L165.8 202.7L160.7 204.5L155.2 204.5L150.0 202.7L145.8 199.1L143.1 194.4L142.1 189.0L143.1 183.6L145.8 178.8L150.0 175.3L155.2 173.4L160.7 173.4L165.8 175.3L170.0 178.8L172.8 183.6ZM220.6 188.5L219.7 193.9L216.9 198.7L212.7 202.2L207.6 204.1L202.1 204.1L196.9 202.2L192.7 198.7L190.0 193.9L189.0 188.5L190.0 183.1L192.7 178.4L196.9 174.8L202.1 173.0L207.6 173.0L212.7 174.8L216.9 178.4L219.7 183.1ZM267.8 188.0L266.9 193.5L264.1 198.2L259.9 201.7L254.8 203.6L249.3 203.6L244.1 201.7L239.9 198.2L237.2 193.5L236.2 188.0L237.2 182.6L239.9 177.9L244.1 174.4L249.3 172.5L254.8 172.5L259.9 174.4L264.1 177.9L266.9 182.6ZM315.3 187.6L314.4 193.0L311.6 197.7L307.4 201.3L302.2 203.1L296.8 203.1L291.6 201.3L287.4 197.7L284.7 193.0L283.7 187.6L284.7 182.2L287.4 177.4L291.6 173.9L296.8 172.0L302.2 172.0L307.4 173.9L311.6 177.4L314.4 182.2ZM363.0 187.1L362.1 192.5L359.3 197.3L355.1 200.8L350.0 202.7L344.5 202.7L339.3 200.8L335.1 197.3L332.4 192.5L331.4 187.1L332.4 181.7L335.1 177.0L339.3 173.4L344.5 171.6L350.0 171.6L355.1 173.4L359.3 177.0L362.1 181.7ZM411.0 186.7L410.1 192.1L407.3 196.8L403.1 200.3L398.0 202.2L392.5 202.2L387.3 200.3L383.1 196.8L380.4 192.1L379.4 186.7L380.4 181.3L383.1 176.5L387.3 173.0L392.5 171.1L398.0 171.1L403.1 173.0L407.3 176.5L410.1 181.3ZM459.3 186.2L458.3 191.6L455.6 196.4L451.4 199.9L446.2 201.8L440.7 201.8L435.6 199.9L431.4 196.4L428.6 191.6L427.7 186.2L428.6 180.8L431.4 176.0L435.6 172.5L440.7 170.6L446.2 170.6L451.4 172.5L455.6 176.0L458.3 180.8ZM507.8 185.7L506.8 191.1L504.1 195.9L499.9 199.4L494.7 201.3L489.2 201.3L484.1 199.4L479.9 195.9L477.1 191.1L476.2 185.7L477.1 180.3L479.9 175.6L484.1 172.1L489.2 170.2L494.7 170.2L499.9 172.1L504.1 175.6L506.8 180.3ZM556.5 185.3L555.6 190.7L552.8 195.4L548.6 199.0L543.5 200.8L538.0 200.8L532.8 199.0L528.6 195.4L525.9 190.7L524.9 185.3L525.9 179.9L528.6 175.1L532.8 171.6L538.0 169.7L543.5 169.7L548.6 171.6L552.8 175.1L555.6 179.9ZM605.6 184.8L604.6 190.2L601.9 195.0L597.7 198.5L592.5 200.4L587.0 200.4L581.9 198.5L577.7 195.0L574.9 190.2L574.0 184.8L574.9 179.4L577.7 174.7L581.9 171.1L587.0 169.2L592.5 169.2L597.7 171.1L601.9 174.7L604.6 179.4Z" fill="#4f5a98" fill-rule="evenodd"/>
<path d="M36.5 165.4L625.6 158.8L625.6 160.8L36.5 167.4Z" fill="#5f6dc6"/>
<path d="M36.5 215.5L625.6 210.7L625.6 213.3L36.5 218.1Z" fill="#5f6dc6"/>
<clipPath id="fb"><path d="M36.5 167.4L625.6 160.8L625.6 210.7L36.5 215.5Z"/></clipPath>
<g clip-path="url(#fb)">
<g opacity="0.28">
<path d="M645.0 158.6L645.0 212.6L490.3 257.3L490.3 220.3Z" fill="#363d6c"/>
<path d="M609.7 198.9L609.1 204.0L607.7 208.3L605.5 211.1L602.9 212.1L600.3 211.1L598.1 208.3L596.7 204.0L596.2 198.9L596.7 193.8L598.1 189.5L600.3 186.6L602.9 185.6L605.5 186.6L607.7 189.5L609.1 193.8Z" fill="#ffffff"/>
<path d="M592.6 204.6L592.2 209.5L590.8 213.6L588.8 216.4L586.4 217.4L584.0 216.4L581.9 213.6L580.6 209.5L580.1 204.6L580.6 199.7L581.9 195.6L584.0 192.8L586.4 191.9L588.8 192.8L590.8 195.6L592.2 199.7Z" fill="#ffffff"/>
<path d="M576.8 209.9L576.4 214.7L575.1 218.6L573.2 221.3L571.0 222.2L568.8 221.3L566.9 218.6L565.6 214.7L565.2 209.9L565.6 205.2L566.9 201.2L568.8 198.6L571.0 197.6L573.2 198.6L575.1 201.2L576.4 205.2Z" fill="#ffffff"/>
<path d="M562.2 214.9L561.7 219.4L560.6 223.3L558.8 225.9L556.7 226.8L554.6 225.9L552.9 223.3L551.7 219.4L551.3 214.9L551.7 210.4L552.9 206.5L554.6 203.9L556.7 203.0L558.8 203.9L560.6 206.5L561.7 210.4Z" fill="#ffffff"/>
<path d="M548.5 219.5L548.1 223.9L547.0 227.7L545.3 230.1L543.4 231.0L541.4 230.1L539.7 227.7L538.6 223.9L538.3 219.5L538.6 215.1L539.7 211.4L541.4 208.9L543.4 208.0L545.3 208.9L547.0 211.4L548.1 215.1Z" fill="#ffffff"/>
<path d="M535.6 223.9L535.3 228.1L534.2 231.7L532.7 234.1L530.9 235.0L529.0 234.1L527.5 231.7L526.4 228.1L526.1 223.9L526.4 219.6L527.5 216.0L529.0 213.6L530.9 212.7L532.7 213.6L534.2 216.0L535.3 219.6Z" fill="#ffffff"/>
<path d="M523.6 227.9L523.3 232.0L522.3 235.5L520.9 237.9L519.2 238.7L517.4 237.9L516.0 235.5L515.0 232.0L514.7 227.9L515.0 223.8L516.0 220.3L517.4 218.0L519.2 217.1L520.9 218.0L522.3 220.3L523.3 223.8Z" fill="#ffffff"/>
<path d="M512.4 231.7L512.1 235.7L511.1 239.1L509.8 241.4L508.1 242.2L506.5 241.4L505.2 239.1L504.2 235.7L503.9 231.7L504.2 227.7L505.2 224.3L506.5 222.1L508.1 221.3L509.8 222.1L511.1 224.3L512.1 227.7Z" fill="#ffffff"/>
<path d="M641.8 158.6L645.0 158.6L490.3 220.3L488.1 220.4Z" fill="#6676cf"/>
<path d="M641.8 212.6L648.2 212.5L492.5 257.2L488.1 257.3Z" fill="#6676cf"/>
</g>
<g opacity="0.22">
<path d="M430.0 160.9L430.0 214.3L343.3 258.4L343.3 221.9Z" fill="#363d6c"/>
<path d="M410.2 200.7L409.9 205.8L409.1 210.1L407.9 213.0L406.4 214.0L404.9 213.0L403.7 210.1L402.9 205.8L402.6 200.7L402.9 195.7L403.7 191.4L404.9 188.5L406.4 187.5L407.9 188.5L409.1 191.4L409.9 195.7Z" fill="#f4f4f4"/>
<path d="M400.7 206.4L400.4 211.3L399.6 215.4L398.5 218.2L397.1 219.2L395.8 218.2L394.6 215.4L393.8 211.3L393.6 206.4L393.8 201.5L394.6 197.4L395.8 194.6L397.1 193.6L398.5 194.6L399.6 197.4L400.4 201.5Z" fill="#f4f4f4"/>
<path d="M391.8 211.7L391.6 216.4L390.9 220.4L389.8 223.0L388.5 224.0L387.2 223.0L386.2 220.4L385.4 216.4L385.2 211.7L385.4 207.0L386.2 203.0L387.2 200.3L388.5 199.4L389.8 200.3L390.9 203.0L391.6 207.0Z" fill="#f4f4f4"/>
<path d="M383.6 216.6L383.3 221.1L382.7 225.0L381.7 227.6L380.5 228.5L379.3 227.6L378.3 225.0L377.6 221.1L377.4 216.6L377.6 212.0L378.3 208.2L379.3 205.6L380.5 204.7L381.7 205.6L382.7 208.2L383.3 212.0Z" fill="#f4f4f4"/>
<path d="M375.9 221.1L375.7 225.5L375.0 229.3L374.1 231.8L373.0 232.6L371.9 231.8L371.0 229.3L370.3 225.5L370.1 221.1L370.3 216.7L371.0 213.0L371.9 210.5L373.0 209.7L374.1 210.5L375.0 213.0L375.7 216.7Z" fill="#f4f4f4"/>
<path d="M368.7 225.4L368.5 229.7L367.9 233.3L367.0 235.7L366.0 236.5L365.0 235.7L364.1 233.3L363.5 229.7L363.3 225.4L363.5 221.2L364.1 217.6L365.0 215.1L366.0 214.3L367.0 215.1L367.9 217.6L368.5 221.2Z" fill="#f4f4f4"/>
<path d="M362.0 229.4L361.8 233.6L361.2 237.1L360.4 239.4L359.4 240.2L358.5 239.4L357.6 237.1L357.1 233.6L356.9 229.4L357.1 225.3L357.6 221.8L358.5 219.5L359.4 218.7L360.4 219.5L361.2 221.8L361.8 225.3Z" fill="#f4f4f4"/>
<path d="M355.7 233.2L355.5 237.2L355.0 240.6L354.2 242.9L353.3 243.6L352.3 242.9L351.6 240.6L351.0 237.2L350.9 233.2L351.0 229.2L351.6 225.8L352.3 223.6L353.3 222.8L354.2 223.6L355.0 225.8L355.5 229.2Z" fill="#f4f4f4"/>
<path d="M425.9 161.0L430.0 160.9L343.3 221.9L340.4 222.0Z" fill="#6676cf"/>
<path d="M425.9 214.3L434.1 214.2L346.1 258.4L340.4 258.4Z" fill="#6676cf"/>
</g>
</g>
<rect x="1.0" y="163.0" width="15.1" height="306.0" fill="#3d4a8c"/>
<rect x="15.8" y="163.0" width="20.6" height="306.0" fill="#4f5b99"/>
<rect x="36.1" y="163.0" width="2.2" height="306.0" fill="#3a4580"/>
<path d="M1 163H15L18 169H1Z" fill="#4d589a"/>
<path d="M15 163H34V169H18Z" fill="#7078b0"/>
<path d="M1 467.5H18L15.5 470.5H1Z" fill="#4a569a"/><path d="M18 467.5H37.7V468H34V471.6H15.5Z" fill="#6d76b0"/>
<rect x="616.6" y="162.0" width="15.1" height="309.7" fill="#4f5b99"/>
<rect x="631.4" y="155.0" width="19.9" height="320.5" fill="#3d4a8c"/>
<rect x="651.0" y="155.0" width="5.5" height="320.5" fill="#4f5b99"/>
<rect x="656.3" y="155.0" width="19.0" height="320.5" fill="#7880b0"/>
</g>
<g shape-rendering="crispEdges">
<line x1="0" y1="114.5" x2="682" y2="114.5" stroke="#6d6d6d" stroke-width="1"/>
<line x1="0.5" y1="114" x2="0.5" y2="508" stroke="#6d6d6d" stroke-width="1"/>
<line x1="681.5" y1="114" x2="681.5" y2="508" stroke="#6d6d6d" stroke-width="1"/>
<line x1="0" y1="507.5" x2="682" y2="507.5" stroke="#6d6d6d" stroke-width="1"/>
<line x1="0" y1="136.5" x2="14" y2="136.5" stroke="#6d6d6d" stroke-width="1"/>
<line x1="116" y1="136.5" x2="681" y2="136.5" stroke="#6d6d6d" stroke-width="1"/>
</g>
<defs><linearGradient id="tabg" x1="0" y1="0" x2="0" y2="1"><stop offset="0" stop-color="#a9c3df"/><stop offset="0.45" stop-color="#bed4ec"/><stop offset="0.6" stop-color="#adc6e3"/><stop offset="1" stop-color="#bad2ec"/></linearGradient></defs>
<path d="M14.5 137V121Q14.5 117.5 18 117.5H112.5Q116 117.5 116 121V137" fill="url(#tabg)" stroke="#6d6d6d" stroke-width="1"/>
<text x="41" y="131" font-size="12" textLength="47" lengthAdjust="spacingAndGlyphs">3-D View</text>
<path d="M637.8 124.8H646.3L642.1 129.2Z" fill="#000"/>
<path d="M654.4 122.4L662.8 129.8M662.8 122.4L654.4 129.8" stroke="#000" stroke-width="1.4"/>
</svg></body></html>
